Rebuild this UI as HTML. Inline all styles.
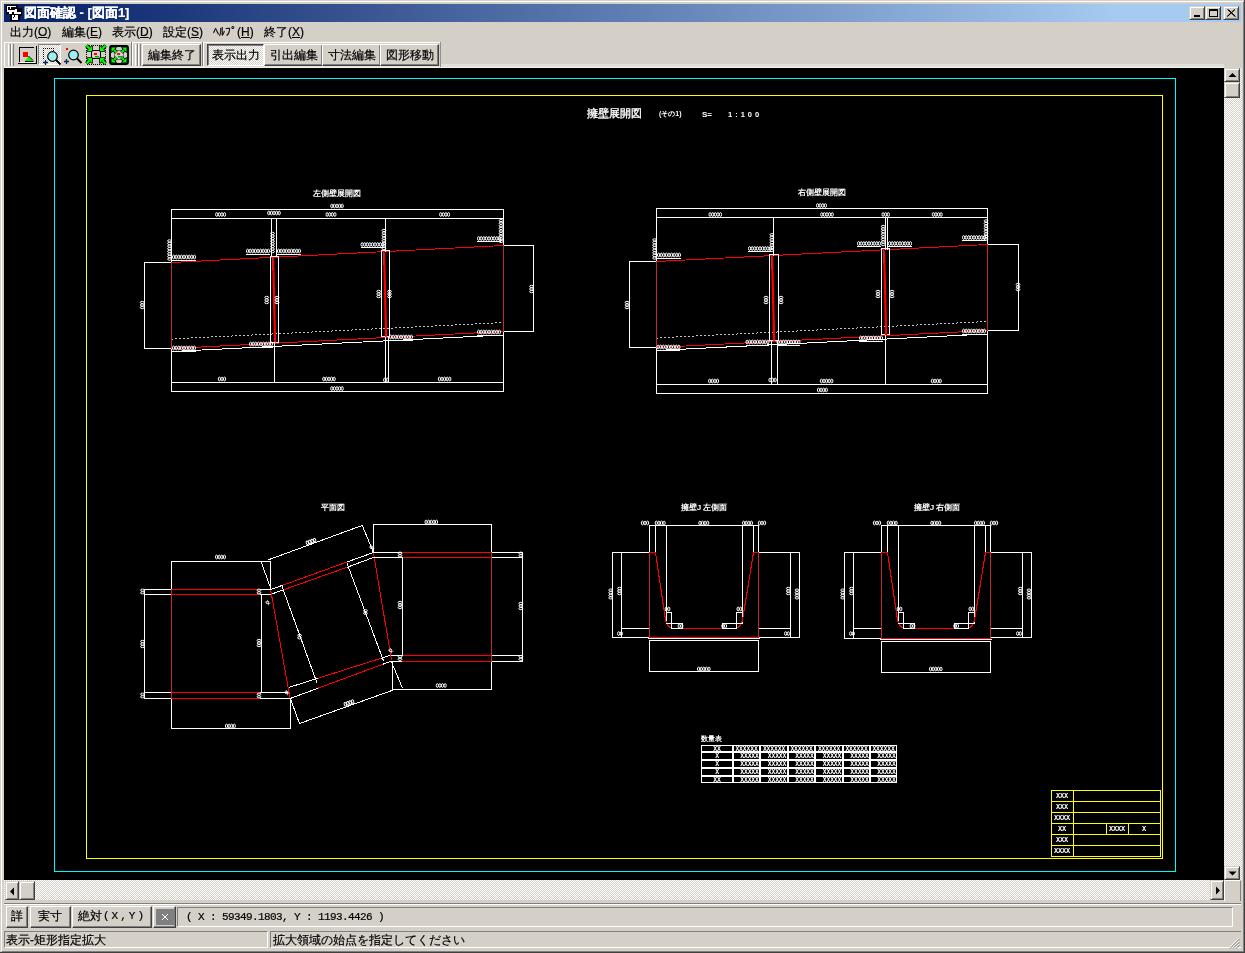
<!DOCTYPE html>
<html><head><meta charset="utf-8">
<style>
*{margin:0;padding:0;box-sizing:border-box}
html,body{width:1245px;height:953px;overflow:hidden;background:#D4D0C8;font-family:"Liberation Sans",sans-serif;font-size:12px;color:#000}
.a{position:absolute}
.t{position:absolute;white-space:nowrap;line-height:12px;font-size:12px;will-change:transform;-webkit-text-stroke:0.2px currentColor}
.m{font-family:"Liberation Mono",monospace;font-size:10px}
.raised{border-top:1px solid #fff;border-left:1px solid #fff;border-right:1px solid #404040;border-bottom:1px solid #404040;box-shadow:inset -1px -1px 0 #808080}
.raised2{border-top:1px solid #D4D0C8;border-left:1px solid #D4D0C8;border-right:1px solid #404040;border-bottom:1px solid #404040;box-shadow:inset 1px 1px 0 #fff,inset -1px -1px 0 #808080}
.sunk{border-top:1px solid #808080;border-left:1px solid #808080;border-right:1px solid #fff;border-bottom:1px solid #fff}
.dither{background-color:#fff;background-image:linear-gradient(45deg,#D4D0C8 25%,transparent 25%,transparent 75%,#D4D0C8 75%),linear-gradient(45deg,#D4D0C8 25%,transparent 25%,transparent 75%,#D4D0C8 75%);background-size:2px 2px;background-position:0 0,1px 1px}
.grip{position:absolute;width:3px;border-left:1px solid #fff;border-right:1px solid #808080}
</style></head><body>
<!-- window frame -->
<div class="a" style="left:1px;top:1px;width:1243px;height:951px;border-top:1px solid #fff;border-left:1px solid #fff;border-right:1px solid #808080;border-bottom:1px solid #808080"></div>
<div class="a" style="left:0;top:0;width:1245px;height:953px;border-right:1px solid #404040;border-bottom:1px solid #404040"></div>

<!-- title bar -->
<div class="a" style="left:4px;top:4px;width:1237px;height:18px;background:linear-gradient(to right,#0A246A 0%,#0A246A 3%,#A6CAF0 90%)"></div>
<svg class="a" style="left:6px;top:5px" width="16" height="16" shape-rendering="crispEdges">
<rect x="0" y="0" width="12" height="9" fill="#000"/><rect x="4" y="8" width="10" height="8" fill="#000"/><rect x="8" y="3" width="8" height="8" fill="#000"/>
<rect x="1" y="1" width="9" height="1" fill="#fff"/><rect x="1" y="2" width="1" height="5" fill="#fff"/><rect x="4" y="2" width="1" height="2" fill="#fff"/>
<rect x="1" y="5" width="9" height="2" fill="#fff"/><rect x="3" y="7" width="3" height="2" fill="#fff"/><rect x="9" y="4" width="2" height="4" fill="#fff"/>
<rect x="8" y="7" width="7" height="2" fill="#fff"/><rect x="6" y="10" width="6" height="5" fill="#fff"/><rect x="8" y="10" width="1" height="2" fill="#000"/><rect x="7" y="12" width="1" height="1" fill="#000"/>
</svg>
<div class="t" style="left:24px;top:6px;color:#fff;font-weight:bold;font-size:13px;line-height:13px">図面確認 - [図面1]</div>
<!-- caption buttons -->
<div class="a raised2" style="left:1189px;top:6px;width:16px;height:14px;background:#D4D0C8"><div class="a" style="left:4px;top:8px;width:6px;height:2px;background:#000"></div></div>
<div class="a raised2" style="left:1205px;top:6px;width:16px;height:14px;background:#D4D0C8"><div class="a" style="left:3px;top:2px;width:9px;height:8px;border:1px solid #000;border-top-width:2px"></div></div>
<div class="a raised2" style="left:1223px;top:6px;width:16px;height:14px;background:#D4D0C8"><svg class="a" style="left:3px;top:2px" width="9" height="8"><path d="M0.5 0.5L8 7.5M1.5 0.5L8.5 7.5M8 0.5L0.5 7.5M7.5 0.5L0 7.5" stroke="#000" stroke-width="1"/></svg></div>

<!-- menu -->
<div class="t" style="left:10px;top:26px">出力(<u>O</u>)</div>
<div class="t" style="left:62px;top:26px">編集(<u>E</u>)</div>
<div class="t" style="left:112px;top:26px">表示(<u>D</u>)</div>
<div class="t" style="left:163px;top:26px">設定(<u>S</u>)</div>
<div class="t" style="left:213px;top:26px">ﾍﾙﾌﾟ(<u>H</u>)</div>
<div class="t" style="left:264px;top:26px">終了(<u>X</u>)</div>

<!-- toolbar -->
<div class="a" style="left:4px;top:42px;width:437px;height:1px;background:#fff"></div>
<div class="a" style="left:441px;top:64px;width:783px;height:2px;background:#E2E0DA"></div>
<div class="a" style="left:4px;top:66px;width:1220px;height:1px;background:#E4E1DB"></div>
<div class="a" style="left:4px;top:67px;width:1220px;height:1px;background:#F2F1EE"></div>
<!-- band 1 -->
<div class="a" style="left:4px;top:42px;width:1px;height:24px;background:#fff"></div>
<div class="grip" style="left:8px;top:44px;height:22px"></div>
<div class="grip" style="left:11px;top:44px;height:22px"></div>

<svg class="a" style="left:0;top:0" width="140" height="68">
  <g shape-rendering="crispEdges">
  <path d="M19.5 62V47.5H34" stroke="#000" fill="none"/>
  <path d="M20 62.5H35" stroke="#fff" fill="none"/>
  <path d="M18 63.5H36.5V46" stroke="#000" fill="none"/>
  <rect x="23" y="52" width="5" height="5" fill="#f00"/>
  </g>
  <path d="M25 61H33L28.5 56.5Z" fill="#0f0"/>
  <path d="M25 61.5H33.5M28.5 56L33 60.5" stroke="#000" fill="none"/>
  <!-- icon2 pressed -->
  <rect x="38" y="44" width="23" height="21" fill="#fff"/>
</svg>
<div class="a dither" style="left:38px;top:44px;width:23px;height:21px;border-top:1px solid #808080;border-left:1px solid #808080;border-right:1px solid #fff;border-bottom:1px solid #fff"></div>
<svg class="a" style="left:0;top:0" width="140" height="68">
  <g shape-rendering="crispEdges" fill="#000">
   <rect x="43" y="48" width="1" height="1"/><rect x="45" y="48" width="1" height="1"/><rect x="47" y="48" width="1" height="1"/><rect x="49" y="48" width="1" height="1"/><rect x="51" y="48" width="1" height="1"/><rect x="53" y="48" width="1" height="1"/>
   <rect x="43" y="50" width="1" height="1"/><rect x="43" y="52" width="1" height="1"/><rect x="43" y="54" width="1" height="1"/><rect x="43" y="56" width="1" height="1"/><rect x="43" y="58" width="1" height="1"/>
   <rect x="53" y="50" width="1" height="1"/>
  </g>
  <circle cx="52.5" cy="56.5" r="4.8" fill="#9ef0f0" stroke="#000" stroke-width="1.2"/>
  <path d="M56 60L60.5 64.5" stroke="#000" stroke-width="2"/>
  <path d="M45.5 60v5M43 62.5h5" stroke="#0A246A" stroke-width="1.3"/>
  <!-- icon3 -->
  <rect x="66" y="48" width="2" height="2" fill="#f00"/>
  <circle cx="73.5" cy="55" r="4.8" fill="#9ef0f0" stroke="#000" stroke-width="1.2"/>
  <path d="M77 58.5L81.5 63" stroke="#000" stroke-width="2"/>
  <path d="M66.5 59v5M64 61.5h5" stroke="#0A246A" stroke-width="1.3"/>
  <!-- icon4 -->
  <g shape-rendering="crispEdges" fill="#000"><rect x="87" y="45" width="1" height="1"/><rect x="87" y="64" width="1" height="1"/><rect x="89" y="45" width="1" height="1"/><rect x="89" y="64" width="1" height="1"/><rect x="91" y="45" width="1" height="1"/><rect x="91" y="64" width="1" height="1"/><rect x="93" y="45" width="1" height="1"/><rect x="93" y="64" width="1" height="1"/><rect x="95" y="45" width="1" height="1"/><rect x="95" y="64" width="1" height="1"/><rect x="97" y="45" width="1" height="1"/><rect x="97" y="64" width="1" height="1"/><rect x="99" y="45" width="1" height="1"/><rect x="99" y="64" width="1" height="1"/><rect x="101" y="45" width="1" height="1"/><rect x="101" y="64" width="1" height="1"/><rect x="103" y="45" width="1" height="1"/><rect x="103" y="64" width="1" height="1"/><rect x="105" y="45" width="1" height="1"/><rect x="105" y="64" width="1" height="1"/><rect x="86" y="46" width="1" height="1"/><rect x="105" y="46" width="1" height="1"/><rect x="86" y="48" width="1" height="1"/><rect x="105" y="48" width="1" height="1"/><rect x="86" y="50" width="1" height="1"/><rect x="105" y="50" width="1" height="1"/><rect x="86" y="52" width="1" height="1"/><rect x="105" y="52" width="1" height="1"/><rect x="86" y="54" width="1" height="1"/><rect x="105" y="54" width="1" height="1"/><rect x="86" y="56" width="1" height="1"/><rect x="105" y="56" width="1" height="1"/><rect x="86" y="58" width="1" height="1"/><rect x="105" y="58" width="1" height="1"/><rect x="86" y="60" width="1" height="1"/><rect x="105" y="60" width="1" height="1"/><rect x="86" y="62" width="1" height="1"/><rect x="105" y="62" width="1" height="1"/></g>
  <rect x="91.5" y="50.5" width="9" height="8" fill="#D4D0C8" stroke="#000"/>
  <rect x="94" y="53" width="3" height="2" fill="#f00"/><rect x="95" y="56" width="4" height="1.5" fill="#0a0"/>
<path d="M92 51L87 51L92 46Z" fill="#000" stroke="#000" stroke-width="1.6" stroke-linejoin="round"/><path d="M89.5 48.5L86.5 45.5" stroke="#000" stroke-width="3.8"/><path d="M100 51L105 51L100 46Z" fill="#000" stroke="#000" stroke-width="1.6" stroke-linejoin="round"/><path d="M102.5 48.5L105.5 45.5" stroke="#000" stroke-width="3.8"/><path d="M92 58L87 58L92 63Z" fill="#000" stroke="#000" stroke-width="1.6" stroke-linejoin="round"/><path d="M89.5 60.5L86.5 63.5" stroke="#000" stroke-width="3.8"/><path d="M100 58L105 58L100 63Z" fill="#000" stroke="#000" stroke-width="1.6" stroke-linejoin="round"/><path d="M102.5 60.5L105.5 63.5" stroke="#000" stroke-width="3.8"/><path d="M92 51L87 51L92 46Z" fill="#00ff00"/><path d="M89.5 48.5L86.5 45.5" stroke="#00ff00" stroke-width="2.2"/><path d="M100 51L105 51L100 46Z" fill="#00ff00"/><path d="M102.5 48.5L105.5 45.5" stroke="#00ff00" stroke-width="2.2"/><path d="M92 58L87 58L92 63Z" fill="#00ff00"/><path d="M89.5 60.5L86.5 63.5" stroke="#00ff00" stroke-width="2.2"/><path d="M100 58L105 58L100 63Z" fill="#00ff00"/><path d="M102.5 60.5L105.5 63.5" stroke="#00ff00" stroke-width="2.2"/>
  <!-- icon5 -->
  <rect x="110" y="46" width="18" height="18" rx="1.5" fill="#D4D0C8" stroke="#000" stroke-width="1.8"/>
  <rect x="114.5" y="50.5" width="9" height="9" fill="none" stroke="#000" stroke-dasharray="1 1" stroke-width="0.9"/>
  <rect x="117" y="53" width="3" height="2" fill="#e02020"/><rect x="118" y="56" width="4" height="1.5" fill="#0a0"/>
<path d="M111.5 47.5L116.0 47.5L111.5 52.0Z" fill="#000" stroke="#000" stroke-width="1.6" stroke-linejoin="round"/><path d="M114.0 50.0L116.5 52.5" stroke="#000" stroke-width="3.6"/><path d="M126.5 47.5L122.0 47.5L126.5 52.0Z" fill="#000" stroke="#000" stroke-width="1.6" stroke-linejoin="round"/><path d="M124.0 50.0L121.5 52.5" stroke="#000" stroke-width="3.6"/><path d="M111.5 62.5L116.0 62.5L111.5 58.0Z" fill="#000" stroke="#000" stroke-width="1.6" stroke-linejoin="round"/><path d="M114.0 60.0L116.5 57.5" stroke="#000" stroke-width="3.6"/><path d="M126.5 62.5L122.0 62.5L126.5 58.0Z" fill="#000" stroke="#000" stroke-width="1.6" stroke-linejoin="round"/><path d="M124.0 60.0L121.5 57.5" stroke="#000" stroke-width="3.6"/><path d="M111.5 47.5L116.0 47.5L111.5 52.0Z" fill="#00ff00"/><path d="M114.0 50.0L116.5 52.5" stroke="#00ff00" stroke-width="2"/><path d="M126.5 47.5L122.0 47.5L126.5 52.0Z" fill="#00ff00"/><path d="M124.0 50.0L121.5 52.5" stroke="#00ff00" stroke-width="2"/><path d="M111.5 62.5L116.0 62.5L111.5 58.0Z" fill="#00ff00"/><path d="M114.0 60.0L116.5 57.5" stroke="#00ff00" stroke-width="2"/><path d="M126.5 62.5L122.0 62.5L126.5 58.0Z" fill="#00ff00"/><path d="M124.0 60.0L121.5 57.5" stroke="#00ff00" stroke-width="2"/>
</svg>
<div class="a" style="left:131px;top:42px;width:1px;height:24px;background:#808080"></div>
<div class="a" style="left:132px;top:42px;width:1px;height:24px;background:#fff"></div>
<!-- band 2 -->
<div class="grip" style="left:135px;top:44px;height:22px"></div>
<div class="grip" style="left:138px;top:44px;height:22px"></div>
<div class="a raised" style="left:142px;top:44px;width:59px;height:22px;background:#D4D0C8"></div>
<div class="t" style="left:148px;top:49px">編集終了</div>
<div class="a" style="left:202px;top:42px;width:1px;height:24px;background:#808080"></div>
<div class="a" style="left:203px;top:42px;width:1px;height:24px;background:#fff"></div>
<!-- band 3 -->
<div class="a dither" style="left:207px;top:44px;width:57px;height:22px;border-top:1px solid #404040;border-left:1px solid #404040;border-right:1px solid #fff;border-bottom:1px solid #fff;box-shadow:inset 1px 1px 0 #808080"></div>
<div class="t" style="left:212px;top:49px">表示出力</div>
<div class="a raised" style="left:264px;top:44px;width:59px;height:22px;background:#D4D0C8"></div>
<div class="t" style="left:270px;top:49px">引出編集</div>
<div class="a raised" style="left:322px;top:44px;width:59px;height:22px;background:#D4D0C8"></div>
<div class="t" style="left:328px;top:49px">寸法編集</div>
<div class="a raised" style="left:380px;top:44px;width:59px;height:22px;background:#D4D0C8"></div>
<div class="t" style="left:386px;top:49px">図形移動</div>
<div class="a" style="left:440px;top:42px;width:1px;height:25px;background:#909090"></div>


<!-- canvas -->
<div class="a" style="left:4px;top:68px;width:1220px;height:812px;background:#000"></div>
<!--CAD--><svg class="a" style="left:0;top:0;will-change:transform" width="1245" height="880" shape-rendering="crispEdges" font-family="Liberation Sans"><rect x="54.5" y="78.5" width="1121" height="793" fill="none" stroke="#00f8ff"/>
<rect x="86.5" y="95.5" width="1076" height="763" fill="none" stroke="#ffff00"/>
<path d="M171 209.5H504" stroke="#ffffff"/>
<path d="M171 218.5H504" stroke="#ffffff"/>
<path d="M171 382.5H504" stroke="#ffffff"/>
<path d="M171 391.5H504" stroke="#ffffff"/>
<path d="M171.5 209V392" stroke="#ffffff"/>
<path d="M503.5 209V392" stroke="#ffffff"/>
<path d="M144 262.5H171" stroke="#ffffff"/>
<path d="M144 348.5H171" stroke="#ffffff"/>
<path d="M144.5 262V349" stroke="#ffffff"/>
<path d="M503 245.5H534" stroke="#ffffff"/>
<path d="M503 331.5H534" stroke="#ffffff"/>
<path d="M533.5 245V332" stroke="#ffffff"/>
<path d="M171.5 351.5L503.5 335" stroke="#ffffff"/>
<path d="M171.5 339L503.5 322.5" stroke="#ffffff" stroke-dasharray="1.5 2.5" stroke-width="0.9" stroke-opacity="0.85"/>
<path d="M171.5 262.5L503.5 245.5" stroke="#ff0000"/>
<path d="M171.5 348.5L503.5 331.5" stroke="#ff0000"/>
<path d="M171.5 262V349" stroke="#c42a2a"/>
<path d="M503.5 245V332" stroke="#c42a2a"/>
<rect x="270.5" y="256.5" width="8" height="86" fill="none" stroke="#ffffff"/>
<path d="M272 257.9563253012048h2.2L276.2 342.4563253012048h-2.2z" fill="#ff0000" shape-rendering="auto"/>
<path d="M272.5 257.4563253012048V270.4563253012048" stroke="#c42a2a"/>
<path d="M271.5 218V257.4563253012048" stroke="#ffffff"/>
<path d="M276.5 218V257.4563253012048" stroke="#ffffff"/>
<path d="M274.5 342.4563253012048V383" stroke="#ffffff"/>
<rect x="381.5" y="250.5" width="8" height="86" fill="none" stroke="#ffffff"/>
<path d="M383 252.2725903614458h2.2L387.2 336.7725903614458h-2.2z" fill="#ff0000" shape-rendering="auto"/>
<path d="M383.5 251.7725903614458V264.7725903614458" stroke="#c42a2a"/>
<path d="M385.5 218V251.7725903614458" stroke="#ffffff"/>
<path d="M385.5 336.7725903614458V383" stroke="#ffffff"/>
<path d="M388.5 336.7725903614458V383" stroke="#ffffff"/>
<text x="337" y="196" font-size="8" fill="#ffffff" text-anchor="middle" font-weight="bold">左側壁展開図</text>
<path d="M656 208.5H988" stroke="#ffffff"/>
<path d="M656 217.5H988" stroke="#ffffff"/>
<path d="M656 384.5H988" stroke="#ffffff"/>
<path d="M656 393.5H988" stroke="#ffffff"/>
<path d="M656.5 208V394" stroke="#ffffff"/>
<path d="M987.5 208V394" stroke="#ffffff"/>
<path d="M629 261.5H656" stroke="#ffffff"/>
<path d="M629 347.5H656" stroke="#ffffff"/>
<path d="M629.5 261V348" stroke="#ffffff"/>
<path d="M987 244.5H1019" stroke="#ffffff"/>
<path d="M987 330.5H1019" stroke="#ffffff"/>
<path d="M1018.5 244V331" stroke="#ffffff"/>
<path d="M656.5 350.5L987.5 334" stroke="#ffffff"/>
<path d="M656.5 338L987.5 321.5" stroke="#ffffff" stroke-dasharray="1.5 2.5" stroke-width="0.9" stroke-opacity="0.85"/>
<path d="M656.5 261.5L987.5 244.5" stroke="#ff0000"/>
<path d="M656.5 347.5L987.5 330.5" stroke="#ff0000"/>
<path d="M656.5 261V348" stroke="#c42a2a"/>
<path d="M987.5 244V331" stroke="#c42a2a"/>
<rect x="769.5" y="254.5" width="9" height="86" fill="none" stroke="#ffffff"/>
<path d="M771 256.22205438066464h2.2L775.2 340.72205438066464h-2.2z" fill="#ff0000" shape-rendering="auto"/>
<path d="M771.5 255.72205438066464V268.72205438066464" stroke="#c42a2a"/>
<path d="M773.5 217V255.72205438066464" stroke="#ffffff"/>
<path d="M771.5 340.72205438066464V385" stroke="#ffffff"/>
<path d="M777.5 340.72205438066464V385" stroke="#ffffff"/>
<rect x="881.5" y="248.5" width="8" height="86" fill="none" stroke="#ffffff"/>
<path d="M883 250.46978851963746h2.2L887.2 334.96978851963746h-2.2z" fill="#ff0000" shape-rendering="auto"/>
<path d="M883.5 249.96978851963746V262.96978851963746" stroke="#c42a2a"/>
<path d="M885.5 217V249.96978851963746" stroke="#ffffff"/>
<path d="M887.5 217V249.96978851963746" stroke="#ffffff"/>
<path d="M885.5 334.96978851963746V385" stroke="#ffffff"/>
<text x="822" y="195" font-size="8" fill="#ffffff" text-anchor="middle" font-weight="bold">右側壁展開図</text>
<path d="M171 561.5H271" stroke="#ffffff"/>
<path d="M171.5 561V729" stroke="#ffffff"/>
<path d="M171 728.5H291" stroke="#ffffff"/>
<path d="M144 589.5H171" stroke="#ffffff"/>
<path d="M171 589.5H260" stroke="#ff0000"/>
<path d="M260 589.5H271" stroke="#ffffff"/>
<path d="M144 594.5H171" stroke="#ffffff"/>
<path d="M171 594.5H260" stroke="#ff0000"/>
<path d="M260 594.5H272" stroke="#ffffff"/>
<path d="M144 692.5H171" stroke="#ffffff"/>
<path d="M171 692.5H260" stroke="#ff0000"/>
<path d="M260 692.5H289" stroke="#ffffff"/>
<path d="M144 698.5H171" stroke="#ffffff"/>
<path d="M171 698.5H260" stroke="#ff0000"/>
<path d="M260 698.5H291" stroke="#ffffff"/>
<path d="M144.5 589V699" stroke="#ffffff"/>
<path d="M171.5 589V699" stroke="#c42a2a"/>
<path d="M261.5 594V693" stroke="#ffffff"/>
<path d="M270.5 561V590" stroke="#ffffff"/>
<path d="M261 561.5L270.6 588" stroke="#ffffff"/>
<path d="M290.5 698V729" stroke="#ffffff"/>
<path d="M290.7 699.5L299.5 723.5" stroke="#ffffff"/>
<path d="M270.6 589.6L282.5 585.3" stroke="#ffffff"/>
<path d="M282.5 585.3L346.5 562.2" stroke="#ff0000"/>
<path d="M346.5 562.2L373.4 552.5" stroke="#ffffff"/>
<path d="M271.7 594L284 589.6" stroke="#ffffff"/>
<path d="M284 589.6L347 567.3" stroke="#ff0000"/>
<path d="M347 567.3L373.9 557.3" stroke="#ffffff"/>
<path d="M288.6 687.5L317.8 678.3" stroke="#ffffff"/>
<path d="M317.8 678.3L380.5 658.4" stroke="#ff0000"/>
<path d="M380.5 658.4L390.9 655.1" stroke="#ffffff"/>
<path d="M290.1 698.5L317.8 688.3" stroke="#ffffff"/>
<path d="M317.8 688.3L383 664.2" stroke="#ff0000"/>
<path d="M383 664.2L391.9 660.9" stroke="#ffffff"/>
<path d="M270.6 589.6L290 698" stroke="#ff0000"/>
<path d="M373.4 552.5L391.5 660" stroke="#ff0000"/>
<path d="M268.4 559.8L362.3 525.4" stroke="#ffffff"/>
<path d="M362.3 525.4L373.4 552.5" stroke="#ffffff"/>
<path d="M299.5 723.5L393 690.1" stroke="#ffffff"/>
<path d="M281.9 586L317 683" stroke="#ffffff"/>
<path d="M346.9 563L383.6 661" stroke="#ffffff"/>
<path d="M373 524.5H492" stroke="#ffffff"/>
<path d="M373.5 524V553" stroke="#ffffff"/>
<path d="M491.5 524V690" stroke="#ffffff"/>
<path d="M373 552.5H402" stroke="#ffffff"/>
<path d="M402 552.5H491" stroke="#ff0000"/>
<path d="M491 552.5H523" stroke="#ffffff"/>
<path d="M373 557.5H402" stroke="#ffffff"/>
<path d="M402 557.5H491" stroke="#ff0000"/>
<path d="M491 557.5H523" stroke="#ffffff"/>
<path d="M391 655.5H402" stroke="#ffffff"/>
<path d="M402 655.5H491" stroke="#ff0000"/>
<path d="M491 655.5H523" stroke="#ffffff"/>
<path d="M392 661.5H402" stroke="#ffffff"/>
<path d="M402 661.5H491" stroke="#ff0000"/>
<path d="M491 661.5H523" stroke="#ffffff"/>
<path d="M491.5 552V662" stroke="#c42a2a"/>
<path d="M402.5 557V656" stroke="#ffffff"/>
<path d="M522.5 552V662" stroke="#ffffff"/>
<path d="M392 689.5H492" stroke="#ffffff"/>
<path d="M392.5 661V690" stroke="#ffffff"/>
<path d="M391.5 662L402.4 688" stroke="#ffffff"/>
<text x="333" y="510" font-size="8" fill="#ffffff" text-anchor="middle" font-weight="bold">平面図</text>
<path d="M649 525.5H759" stroke="#ffffff"/>
<path d="M649.5 525V553" stroke="#ffffff"/>
<path d="M758.5 525V553" stroke="#ffffff"/>
<path d="M655.5 525V553" stroke="#ffffff"/>
<path d="M753.5 525V553" stroke="#ffffff"/>
<path d="M666.5 525V624" stroke="#ffffff"/>
<path d="M742.5 525V624" stroke="#ffffff"/>
<path d="M612 552.5H650" stroke="#ffffff"/>
<path d="M612 637.5H650" stroke="#ffffff"/>
<path d="M612.5 552V638" stroke="#ffffff"/>
<path d="M621.5 552V638" stroke="#ffffff"/>
<path d="M621 628.5H649" stroke="#ffffff"/>
<path d="M758 552.5H800" stroke="#ffffff"/>
<path d="M758 637.5H800" stroke="#ffffff"/>
<path d="M799.5 552V638" stroke="#ffffff"/>
<path d="M790.5 552V638" stroke="#ffffff"/>
<path d="M758 628.5H790" stroke="#ffffff"/>
<path d="M649.5 552V638" stroke="#c42a2a"/>
<path d="M758.5 552V638" stroke="#c42a2a"/>
<path d="M649 552.5H656" stroke="#ff0000"/>
<path d="M753 552.5H759" stroke="#ff0000"/>
<path d="M655.5 552.5L665.5 620Q667 626 672 628.5" stroke="#ff0000" fill="none" stroke-width="1.1"/>
<path d="M753.5 552.5L742.5 620Q741 626 736 628.5" stroke="#ff0000" fill="none" stroke-width="1.1"/>
<path d="M683 628.5H722" stroke="#ff0000"/>
<path d="M666 612.5H671.5V628.5H682.5V623.5H666" stroke="#ffffff" fill="none"/>
<path d="M743 612.5H736.5V628.5H722.5V623.5H743" stroke="#ffffff" fill="none"/>
<path d="M648 638.5H760" stroke="#ffffff"/>
<path d="M649 637.5H759" stroke="#ff0000"/>
<rect x="649.5" y="640.5" width="109" height="31" fill="none" stroke="#ffffff"/>
<text x="704" y="510" font-size="8" fill="#ffffff" text-anchor="middle" font-weight="bold">擁壁J 左側面</text>
<path d="M881 525.5H991" stroke="#ffffff"/>
<path d="M881.5 525V553" stroke="#ffffff"/>
<path d="M990.5 525V553" stroke="#ffffff"/>
<path d="M887.5 525V553" stroke="#ffffff"/>
<path d="M985.5 525V553" stroke="#ffffff"/>
<path d="M898.5 525V624" stroke="#ffffff"/>
<path d="M974.5 525V624" stroke="#ffffff"/>
<path d="M844 552.5H882" stroke="#ffffff"/>
<path d="M844 638.5H882" stroke="#ffffff"/>
<path d="M844.5 552V639" stroke="#ffffff"/>
<path d="M853.5 552V639" stroke="#ffffff"/>
<path d="M853 628.5H881" stroke="#ffffff"/>
<path d="M990 552.5H1032" stroke="#ffffff"/>
<path d="M990 637.5H1032" stroke="#ffffff"/>
<path d="M1031.5 552V638" stroke="#ffffff"/>
<path d="M1022.5 552V638" stroke="#ffffff"/>
<path d="M990 628.5H1022" stroke="#ffffff"/>
<path d="M881.5 552V639" stroke="#c42a2a"/>
<path d="M990.5 552V639" stroke="#c42a2a"/>
<path d="M881 552.5H888" stroke="#ff0000"/>
<path d="M985 552.5H991" stroke="#ff0000"/>
<path d="M887.5 552.5L897.5 620Q899 626 904 628.5" stroke="#ff0000" fill="none" stroke-width="1.1"/>
<path d="M985.5 552.5L974.5 620Q973 626 968 628.5" stroke="#ff0000" fill="none" stroke-width="1.1"/>
<path d="M915 628.5H954" stroke="#ff0000"/>
<path d="M898 612.5H903.5V628.5H914.5V623.5H898" stroke="#ffffff" fill="none"/>
<path d="M975 612.5H968.5V628.5H954.5V623.5H975" stroke="#ffffff" fill="none"/>
<path d="M880 639.5H992" stroke="#ffffff"/>
<path d="M881 638.5H991" stroke="#ff0000"/>
<rect x="881.5" y="641.5" width="109" height="31" fill="none" stroke="#ffffff"/>
<text x="937" y="510" font-size="8" fill="#ffffff" text-anchor="middle" font-weight="bold">擁壁J 右側面</text>
<text x="701" y="741" font-size="7" fill="#ffffff" text-anchor="start" font-weight="bold">数量表</text>
<rect x="701.5" y="745.5" width="31" height="6" fill="none" stroke="#ffffff"/>
<rect x="701.5" y="752.5" width="31" height="7" fill="none" stroke="#ffffff"/>
<rect x="701.5" y="760.5" width="31" height="7" fill="none" stroke="#ffffff"/>
<rect x="701.5" y="768.5" width="31" height="7" fill="none" stroke="#ffffff"/>
<rect x="701.5" y="776.5" width="31" height="6" fill="none" stroke="#ffffff"/>
<rect x="733.5" y="745.5" width="26" height="6" fill="none" stroke="#ffffff"/>
<rect x="733.5" y="752.5" width="26" height="7" fill="none" stroke="#ffffff"/>
<rect x="733.5" y="760.5" width="26" height="7" fill="none" stroke="#ffffff"/>
<rect x="733.5" y="768.5" width="26" height="7" fill="none" stroke="#ffffff"/>
<rect x="733.5" y="776.5" width="26" height="6" fill="none" stroke="#ffffff"/>
<rect x="760.5" y="745.5" width="27" height="6" fill="none" stroke="#ffffff"/>
<rect x="760.5" y="752.5" width="27" height="7" fill="none" stroke="#ffffff"/>
<rect x="760.5" y="760.5" width="27" height="7" fill="none" stroke="#ffffff"/>
<rect x="760.5" y="768.5" width="27" height="7" fill="none" stroke="#ffffff"/>
<rect x="760.5" y="776.5" width="27" height="6" fill="none" stroke="#ffffff"/>
<rect x="788.5" y="745.5" width="26" height="6" fill="none" stroke="#ffffff"/>
<rect x="788.5" y="752.5" width="26" height="7" fill="none" stroke="#ffffff"/>
<rect x="788.5" y="760.5" width="26" height="7" fill="none" stroke="#ffffff"/>
<rect x="788.5" y="768.5" width="26" height="7" fill="none" stroke="#ffffff"/>
<rect x="788.5" y="776.5" width="26" height="6" fill="none" stroke="#ffffff"/>
<rect x="815.5" y="745.5" width="27" height="6" fill="none" stroke="#ffffff"/>
<rect x="815.5" y="752.5" width="27" height="7" fill="none" stroke="#ffffff"/>
<rect x="815.5" y="760.5" width="27" height="7" fill="none" stroke="#ffffff"/>
<rect x="815.5" y="768.5" width="27" height="7" fill="none" stroke="#ffffff"/>
<rect x="815.5" y="776.5" width="27" height="6" fill="none" stroke="#ffffff"/>
<rect x="843.5" y="745.5" width="26" height="6" fill="none" stroke="#ffffff"/>
<rect x="843.5" y="752.5" width="26" height="7" fill="none" stroke="#ffffff"/>
<rect x="843.5" y="760.5" width="26" height="7" fill="none" stroke="#ffffff"/>
<rect x="843.5" y="768.5" width="26" height="7" fill="none" stroke="#ffffff"/>
<rect x="843.5" y="776.5" width="26" height="6" fill="none" stroke="#ffffff"/>
<rect x="870.5" y="745.5" width="26" height="6" fill="none" stroke="#ffffff"/>
<rect x="870.5" y="752.5" width="26" height="7" fill="none" stroke="#ffffff"/>
<rect x="870.5" y="760.5" width="26" height="7" fill="none" stroke="#ffffff"/>
<rect x="870.5" y="768.5" width="26" height="7" fill="none" stroke="#ffffff"/>
<rect x="870.5" y="776.5" width="26" height="6" fill="none" stroke="#ffffff"/>
<rect x="1051.5" y="790.5" width="109" height="66" fill="none" stroke="#ffff00"/>
<path d="M1051 801.5H1161" stroke="#ffff00"/>
<path d="M1051 812.5H1161" stroke="#ffff00"/>
<path d="M1051 823.5H1161" stroke="#ffff00"/>
<path d="M1051 834.5H1161" stroke="#ffff00"/>
<path d="M1051 845.5H1161" stroke="#ffff00"/>
<path d="M1073.5 790V857" stroke="#ffff00"/>
<path d="M1106.5 823V835" stroke="#ffff00"/>
<path d="M1128.5 823V835" stroke="#ffff00"/>
<text x="587" y="117" font-size="11" fill="#ffffff" text-anchor="start" stroke="#fff" stroke-width="0.35">擁壁展開図</text>
<text x="659" y="116" font-size="7" fill="#ffffff" text-anchor="start" font-weight="bold">(その1)</text>
<text x="702" y="116.5" font-size="8" fill="#ffffff" text-anchor="start" font-weight="bold">S=</text>
<text x="728" y="116.5" font-size="7.5" fill="#ffffff" text-anchor="start" font-weight="bold" letter-spacing="3">1:100</text>
<path d="M215.60 214.5a1.1 1.9 0 1 0 2.2 0a1.1 1.9 0 1 0 -2.2 0M218.20 214.5a1.1 1.9 0 1 0 2.2 0a1.1 1.9 0 1 0 -2.2 0M220.80 214.5a1.1 1.9 0 1 0 2.2 0a1.1 1.9 0 1 0 -2.2 0M223.40 214.5a1.1 1.9 0 1 0 2.2 0a1.1 1.9 0 1 0 -2.2 0" fill="none" stroke="#ffffff" stroke-width="1" shape-rendering="auto"/>
<path d="M267.70 213a1.1 1.9 0 1 0 2.2 0a1.1 1.9 0 1 0 -2.2 0M270.30 213a1.1 1.9 0 1 0 2.2 0a1.1 1.9 0 1 0 -2.2 0M272.90 213a1.1 1.9 0 1 0 2.2 0a1.1 1.9 0 1 0 -2.2 0M275.50 213a1.1 1.9 0 1 0 2.2 0a1.1 1.9 0 1 0 -2.2 0M278.10 213a1.1 1.9 0 1 0 2.2 0a1.1 1.9 0 1 0 -2.2 0" fill="none" stroke="#ffffff" stroke-width="1" shape-rendering="auto"/>
<path d="M326.00 214.5a1.1 1.9 0 1 0 2.2 0a1.1 1.9 0 1 0 -2.2 0M328.60 214.5a1.1 1.9 0 1 0 2.2 0a1.1 1.9 0 1 0 -2.2 0M331.20 214.5a1.1 1.9 0 1 0 2.2 0a1.1 1.9 0 1 0 -2.2 0M333.80 214.5a1.1 1.9 0 1 0 2.2 0a1.1 1.9 0 1 0 -2.2 0" fill="none" stroke="#ffffff" stroke-width="1" shape-rendering="auto"/>
<path d="M439.60 214.5a1.1 1.9 0 1 0 2.2 0a1.1 1.9 0 1 0 -2.2 0M442.20 214.5a1.1 1.9 0 1 0 2.2 0a1.1 1.9 0 1 0 -2.2 0M444.80 214.5a1.1 1.9 0 1 0 2.2 0a1.1 1.9 0 1 0 -2.2 0M447.40 214.5a1.1 1.9 0 1 0 2.2 0a1.1 1.9 0 1 0 -2.2 0" fill="none" stroke="#ffffff" stroke-width="1" shape-rendering="auto"/>
<path d="M330.70 206a1.1 1.9 0 1 0 2.2 0a1.1 1.9 0 1 0 -2.2 0M333.30 206a1.1 1.9 0 1 0 2.2 0a1.1 1.9 0 1 0 -2.2 0M335.90 206a1.1 1.9 0 1 0 2.2 0a1.1 1.9 0 1 0 -2.2 0M338.50 206a1.1 1.9 0 1 0 2.2 0a1.1 1.9 0 1 0 -2.2 0M341.10 206a1.1 1.9 0 1 0 2.2 0a1.1 1.9 0 1 0 -2.2 0" fill="none" stroke="#ffffff" stroke-width="1" shape-rendering="auto"/>
<path d="M218.30 379a1.1 1.9 0 1 0 2.2 0a1.1 1.9 0 1 0 -2.2 0M220.90 379a1.1 1.9 0 1 0 2.2 0a1.1 1.9 0 1 0 -2.2 0M223.50 379a1.1 1.9 0 1 0 2.2 0a1.1 1.9 0 1 0 -2.2 0" fill="none" stroke="#ffffff" stroke-width="1" shape-rendering="auto"/>
<path d="M322.70 379a1.1 1.9 0 1 0 2.2 0a1.1 1.9 0 1 0 -2.2 0M325.30 379a1.1 1.9 0 1 0 2.2 0a1.1 1.9 0 1 0 -2.2 0M327.90 379a1.1 1.9 0 1 0 2.2 0a1.1 1.9 0 1 0 -2.2 0M330.50 379a1.1 1.9 0 1 0 2.2 0a1.1 1.9 0 1 0 -2.2 0M333.10 379a1.1 1.9 0 1 0 2.2 0a1.1 1.9 0 1 0 -2.2 0" fill="none" stroke="#ffffff" stroke-width="1" shape-rendering="auto"/>
<path d="M438.30 379a1.1 1.9 0 1 0 2.2 0a1.1 1.9 0 1 0 -2.2 0M440.90 379a1.1 1.9 0 1 0 2.2 0a1.1 1.9 0 1 0 -2.2 0M443.50 379a1.1 1.9 0 1 0 2.2 0a1.1 1.9 0 1 0 -2.2 0M446.10 379a1.1 1.9 0 1 0 2.2 0a1.1 1.9 0 1 0 -2.2 0M448.70 379a1.1 1.9 0 1 0 2.2 0a1.1 1.9 0 1 0 -2.2 0" fill="none" stroke="#ffffff" stroke-width="1" shape-rendering="auto"/>
<path d="M330.70 388.5a1.1 1.9 0 1 0 2.2 0a1.1 1.9 0 1 0 -2.2 0M333.30 388.5a1.1 1.9 0 1 0 2.2 0a1.1 1.9 0 1 0 -2.2 0M335.90 388.5a1.1 1.9 0 1 0 2.2 0a1.1 1.9 0 1 0 -2.2 0M338.50 388.5a1.1 1.9 0 1 0 2.2 0a1.1 1.9 0 1 0 -2.2 0M341.10 388.5a1.1 1.9 0 1 0 2.2 0a1.1 1.9 0 1 0 -2.2 0" fill="none" stroke="#ffffff" stroke-width="1" shape-rendering="auto"/>
<path d="M383.60 380a1.1 1.9 0 1 0 2.2 0a1.1 1.9 0 1 0 -2.2 0M386.20 380a1.1 1.9 0 1 0 2.2 0a1.1 1.9 0 1 0 -2.2 0" fill="none" stroke="#ffffff" stroke-width="1" shape-rendering="auto"/>
<path d="M159.30 250a1.1 1.9 0 1 0 2.2 0a1.1 1.9 0 1 0 -2.2 0M161.90 250a1.1 1.9 0 1 0 2.2 0a1.1 1.9 0 1 0 -2.2 0M164.50 250a1.1 1.9 0 1 0 2.2 0a1.1 1.9 0 1 0 -2.2 0M167.10 250a1.1 1.9 0 1 0 2.2 0a1.1 1.9 0 1 0 -2.2 0M169.70 250a1.1 1.9 0 1 0 2.2 0a1.1 1.9 0 1 0 -2.2 0M172.30 250a1.1 1.9 0 1 0 2.2 0a1.1 1.9 0 1 0 -2.2 0M174.90 250a1.1 1.9 0 1 0 2.2 0a1.1 1.9 0 1 0 -2.2 0M177.50 250a1.1 1.9 0 1 0 2.2 0a1.1 1.9 0 1 0 -2.2 0" fill="none" stroke="#ffffff" stroke-width="1" shape-rendering="auto" transform="rotate(-90 169.5 250)"/>
<path d="M262.30 242.5a1.1 1.9 0 1 0 2.2 0a1.1 1.9 0 1 0 -2.2 0M264.90 242.5a1.1 1.9 0 1 0 2.2 0a1.1 1.9 0 1 0 -2.2 0M267.50 242.5a1.1 1.9 0 1 0 2.2 0a1.1 1.9 0 1 0 -2.2 0M270.10 242.5a1.1 1.9 0 1 0 2.2 0a1.1 1.9 0 1 0 -2.2 0M272.70 242.5a1.1 1.9 0 1 0 2.2 0a1.1 1.9 0 1 0 -2.2 0M275.30 242.5a1.1 1.9 0 1 0 2.2 0a1.1 1.9 0 1 0 -2.2 0M277.90 242.5a1.1 1.9 0 1 0 2.2 0a1.1 1.9 0 1 0 -2.2 0M280.50 242.5a1.1 1.9 0 1 0 2.2 0a1.1 1.9 0 1 0 -2.2 0" fill="none" stroke="#ffffff" stroke-width="1" shape-rendering="auto" transform="rotate(-90 272.5 242.5)"/>
<path d="M373.70 239.5a1.1 1.9 0 1 0 2.2 0a1.1 1.9 0 1 0 -2.2 0M376.30 239.5a1.1 1.9 0 1 0 2.2 0a1.1 1.9 0 1 0 -2.2 0M378.90 239.5a1.1 1.9 0 1 0 2.2 0a1.1 1.9 0 1 0 -2.2 0M381.50 239.5a1.1 1.9 0 1 0 2.2 0a1.1 1.9 0 1 0 -2.2 0M384.10 239.5a1.1 1.9 0 1 0 2.2 0a1.1 1.9 0 1 0 -2.2 0M386.70 239.5a1.1 1.9 0 1 0 2.2 0a1.1 1.9 0 1 0 -2.2 0M389.30 239.5a1.1 1.9 0 1 0 2.2 0a1.1 1.9 0 1 0 -2.2 0M391.90 239.5a1.1 1.9 0 1 0 2.2 0a1.1 1.9 0 1 0 -2.2 0" fill="none" stroke="#ffffff" stroke-width="1" shape-rendering="auto" transform="rotate(-90 383.9 239.5)"/>
<path d="M489.50 231a1.1 1.9 0 1 0 2.2 0a1.1 1.9 0 1 0 -2.2 0M492.10 231a1.1 1.9 0 1 0 2.2 0a1.1 1.9 0 1 0 -2.2 0M494.70 231a1.1 1.9 0 1 0 2.2 0a1.1 1.9 0 1 0 -2.2 0M497.30 231a1.1 1.9 0 1 0 2.2 0a1.1 1.9 0 1 0 -2.2 0M499.90 231a1.1 1.9 0 1 0 2.2 0a1.1 1.9 0 1 0 -2.2 0M502.50 231a1.1 1.9 0 1 0 2.2 0a1.1 1.9 0 1 0 -2.2 0M505.10 231a1.1 1.9 0 1 0 2.2 0a1.1 1.9 0 1 0 -2.2 0M507.70 231a1.1 1.9 0 1 0 2.2 0a1.1 1.9 0 1 0 -2.2 0M510.30 231a1.1 1.9 0 1 0 2.2 0a1.1 1.9 0 1 0 -2.2 0" fill="none" stroke="#ffffff" stroke-width="1" shape-rendering="auto" transform="rotate(-90 501 231)"/>
<path d="M527.80 289a1.1 1.9 0 1 0 2.2 0a1.1 1.9 0 1 0 -2.2 0M530.40 289a1.1 1.9 0 1 0 2.2 0a1.1 1.9 0 1 0 -2.2 0M533.00 289a1.1 1.9 0 1 0 2.2 0a1.1 1.9 0 1 0 -2.2 0" fill="none" stroke="#ffffff" stroke-width="1" shape-rendering="auto" transform="rotate(-90 531.5 289)"/>
<path d="M138.50 305a1.1 1.9 0 1 0 2.2 0a1.1 1.9 0 1 0 -2.2 0M141.10 305a1.1 1.9 0 1 0 2.2 0a1.1 1.9 0 1 0 -2.2 0M143.70 305a1.1 1.9 0 1 0 2.2 0a1.1 1.9 0 1 0 -2.2 0" fill="none" stroke="#ffffff" stroke-width="1" shape-rendering="auto" transform="rotate(-90 142.2 305)"/>
<path d="M263.00 300a1.1 1.9 0 1 0 2.2 0a1.1 1.9 0 1 0 -2.2 0M265.60 300a1.1 1.9 0 1 0 2.2 0a1.1 1.9 0 1 0 -2.2 0M268.20 300a1.1 1.9 0 1 0 2.2 0a1.1 1.9 0 1 0 -2.2 0" fill="none" stroke="#ffffff" stroke-width="1" shape-rendering="auto" transform="rotate(-90 266.7 300)"/>
<path d="M273.30 300a1.1 1.9 0 1 0 2.2 0a1.1 1.9 0 1 0 -2.2 0M275.90 300a1.1 1.9 0 1 0 2.2 0a1.1 1.9 0 1 0 -2.2 0M278.50 300a1.1 1.9 0 1 0 2.2 0a1.1 1.9 0 1 0 -2.2 0" fill="none" stroke="#ffffff" stroke-width="1" shape-rendering="auto" transform="rotate(-90 277 300)"/>
<path d="M375.00 294a1.1 1.9 0 1 0 2.2 0a1.1 1.9 0 1 0 -2.2 0M377.60 294a1.1 1.9 0 1 0 2.2 0a1.1 1.9 0 1 0 -2.2 0M380.20 294a1.1 1.9 0 1 0 2.2 0a1.1 1.9 0 1 0 -2.2 0" fill="none" stroke="#ffffff" stroke-width="1" shape-rendering="auto" transform="rotate(-90 378.7 294)"/>
<path d="M385.80 294a1.1 1.9 0 1 0 2.2 0a1.1 1.9 0 1 0 -2.2 0M388.40 294a1.1 1.9 0 1 0 2.2 0a1.1 1.9 0 1 0 -2.2 0M391.00 294a1.1 1.9 0 1 0 2.2 0a1.1 1.9 0 1 0 -2.2 0" fill="none" stroke="#ffffff" stroke-width="1" shape-rendering="auto" transform="rotate(-90 389.5 294)"/>
<path d="M172.50 257a1.1 1.9 0 1 0 2.2 0a1.1 1.9 0 1 0 -2.2 0M175.10 257a1.1 1.9 0 1 0 2.2 0a1.1 1.9 0 1 0 -2.2 0M177.70 257a1.1 1.9 0 1 0 2.2 0a1.1 1.9 0 1 0 -2.2 0M180.30 257a1.1 1.9 0 1 0 2.2 0a1.1 1.9 0 1 0 -2.2 0M182.90 257a1.1 1.9 0 1 0 2.2 0a1.1 1.9 0 1 0 -2.2 0M185.50 257a1.1 1.9 0 1 0 2.2 0a1.1 1.9 0 1 0 -2.2 0M188.10 257a1.1 1.9 0 1 0 2.2 0a1.1 1.9 0 1 0 -2.2 0M190.70 257a1.1 1.9 0 1 0 2.2 0a1.1 1.9 0 1 0 -2.2 0M193.30 257a1.1 1.9 0 1 0 2.2 0a1.1 1.9 0 1 0 -2.2 0" fill="none" stroke="#ffffff" stroke-width="1" shape-rendering="auto"/>
<path d="M172.3 260.5H195.7" stroke="#ffffff"/>
<path d="M246.50 251a1.1 1.9 0 1 0 2.2 0a1.1 1.9 0 1 0 -2.2 0M249.10 251a1.1 1.9 0 1 0 2.2 0a1.1 1.9 0 1 0 -2.2 0M251.70 251a1.1 1.9 0 1 0 2.2 0a1.1 1.9 0 1 0 -2.2 0M254.30 251a1.1 1.9 0 1 0 2.2 0a1.1 1.9 0 1 0 -2.2 0M256.90 251a1.1 1.9 0 1 0 2.2 0a1.1 1.9 0 1 0 -2.2 0M259.50 251a1.1 1.9 0 1 0 2.2 0a1.1 1.9 0 1 0 -2.2 0M262.10 251a1.1 1.9 0 1 0 2.2 0a1.1 1.9 0 1 0 -2.2 0M264.70 251a1.1 1.9 0 1 0 2.2 0a1.1 1.9 0 1 0 -2.2 0M267.30 251a1.1 1.9 0 1 0 2.2 0a1.1 1.9 0 1 0 -2.2 0" fill="none" stroke="#ffffff" stroke-width="1" shape-rendering="auto"/>
<path d="M246.3 254.5H269.7" stroke="#ffffff"/>
<path d="M277.50 251a1.1 1.9 0 1 0 2.2 0a1.1 1.9 0 1 0 -2.2 0M280.10 251a1.1 1.9 0 1 0 2.2 0a1.1 1.9 0 1 0 -2.2 0M282.70 251a1.1 1.9 0 1 0 2.2 0a1.1 1.9 0 1 0 -2.2 0M285.30 251a1.1 1.9 0 1 0 2.2 0a1.1 1.9 0 1 0 -2.2 0M287.90 251a1.1 1.9 0 1 0 2.2 0a1.1 1.9 0 1 0 -2.2 0M290.50 251a1.1 1.9 0 1 0 2.2 0a1.1 1.9 0 1 0 -2.2 0M293.10 251a1.1 1.9 0 1 0 2.2 0a1.1 1.9 0 1 0 -2.2 0M295.70 251a1.1 1.9 0 1 0 2.2 0a1.1 1.9 0 1 0 -2.2 0M298.30 251a1.1 1.9 0 1 0 2.2 0a1.1 1.9 0 1 0 -2.2 0" fill="none" stroke="#ffffff" stroke-width="1" shape-rendering="auto"/>
<path d="M277.3 254.5H300.7" stroke="#ffffff"/>
<path d="M361.00 244.5a1.1 1.9 0 1 0 2.2 0a1.1 1.9 0 1 0 -2.2 0M363.60 244.5a1.1 1.9 0 1 0 2.2 0a1.1 1.9 0 1 0 -2.2 0M366.20 244.5a1.1 1.9 0 1 0 2.2 0a1.1 1.9 0 1 0 -2.2 0M368.80 244.5a1.1 1.9 0 1 0 2.2 0a1.1 1.9 0 1 0 -2.2 0M371.40 244.5a1.1 1.9 0 1 0 2.2 0a1.1 1.9 0 1 0 -2.2 0M374.00 244.5a1.1 1.9 0 1 0 2.2 0a1.1 1.9 0 1 0 -2.2 0M376.60 244.5a1.1 1.9 0 1 0 2.2 0a1.1 1.9 0 1 0 -2.2 0M379.20 244.5a1.1 1.9 0 1 0 2.2 0a1.1 1.9 0 1 0 -2.2 0M381.80 244.5a1.1 1.9 0 1 0 2.2 0a1.1 1.9 0 1 0 -2.2 0" fill="none" stroke="#ffffff" stroke-width="1" shape-rendering="auto"/>
<path d="M360.8 247.5H384.2" stroke="#ffffff"/>
<path d="M477.50 238.5a1.1 1.9 0 1 0 2.2 0a1.1 1.9 0 1 0 -2.2 0M480.10 238.5a1.1 1.9 0 1 0 2.2 0a1.1 1.9 0 1 0 -2.2 0M482.70 238.5a1.1 1.9 0 1 0 2.2 0a1.1 1.9 0 1 0 -2.2 0M485.30 238.5a1.1 1.9 0 1 0 2.2 0a1.1 1.9 0 1 0 -2.2 0M487.90 238.5a1.1 1.9 0 1 0 2.2 0a1.1 1.9 0 1 0 -2.2 0M490.50 238.5a1.1 1.9 0 1 0 2.2 0a1.1 1.9 0 1 0 -2.2 0M493.10 238.5a1.1 1.9 0 1 0 2.2 0a1.1 1.9 0 1 0 -2.2 0M495.70 238.5a1.1 1.9 0 1 0 2.2 0a1.1 1.9 0 1 0 -2.2 0M498.30 238.5a1.1 1.9 0 1 0 2.2 0a1.1 1.9 0 1 0 -2.2 0" fill="none" stroke="#ffffff" stroke-width="1" shape-rendering="auto"/>
<path d="M477.3 241.5H500.7" stroke="#ffffff"/>
<path d="M172.50 348a1.1 1.9 0 1 0 2.2 0a1.1 1.9 0 1 0 -2.2 0M175.10 348a1.1 1.9 0 1 0 2.2 0a1.1 1.9 0 1 0 -2.2 0M177.70 348a1.1 1.9 0 1 0 2.2 0a1.1 1.9 0 1 0 -2.2 0M180.30 348a1.1 1.9 0 1 0 2.2 0a1.1 1.9 0 1 0 -2.2 0M182.90 348a1.1 1.9 0 1 0 2.2 0a1.1 1.9 0 1 0 -2.2 0M185.50 348a1.1 1.9 0 1 0 2.2 0a1.1 1.9 0 1 0 -2.2 0M188.10 348a1.1 1.9 0 1 0 2.2 0a1.1 1.9 0 1 0 -2.2 0M190.70 348a1.1 1.9 0 1 0 2.2 0a1.1 1.9 0 1 0 -2.2 0M193.30 348a1.1 1.9 0 1 0 2.2 0a1.1 1.9 0 1 0 -2.2 0" fill="none" stroke="#ffffff" stroke-width="1" shape-rendering="auto"/>
<path d="M172.3 351.5H195.7" stroke="#ffffff"/>
<path d="M249.50 344a1.1 1.9 0 1 0 2.2 0a1.1 1.9 0 1 0 -2.2 0M252.10 344a1.1 1.9 0 1 0 2.2 0a1.1 1.9 0 1 0 -2.2 0M254.70 344a1.1 1.9 0 1 0 2.2 0a1.1 1.9 0 1 0 -2.2 0M257.30 344a1.1 1.9 0 1 0 2.2 0a1.1 1.9 0 1 0 -2.2 0M259.90 344a1.1 1.9 0 1 0 2.2 0a1.1 1.9 0 1 0 -2.2 0M262.50 344a1.1 1.9 0 1 0 2.2 0a1.1 1.9 0 1 0 -2.2 0M265.10 344a1.1 1.9 0 1 0 2.2 0a1.1 1.9 0 1 0 -2.2 0M267.70 344a1.1 1.9 0 1 0 2.2 0a1.1 1.9 0 1 0 -2.2 0M270.30 344a1.1 1.9 0 1 0 2.2 0a1.1 1.9 0 1 0 -2.2 0" fill="none" stroke="#ffffff" stroke-width="1" shape-rendering="auto"/>
<path d="M249.3 347.5H272.7" stroke="#ffffff"/>
<path d="M389.50 337a1.1 1.9 0 1 0 2.2 0a1.1 1.9 0 1 0 -2.2 0M392.10 337a1.1 1.9 0 1 0 2.2 0a1.1 1.9 0 1 0 -2.2 0M394.70 337a1.1 1.9 0 1 0 2.2 0a1.1 1.9 0 1 0 -2.2 0M397.30 337a1.1 1.9 0 1 0 2.2 0a1.1 1.9 0 1 0 -2.2 0M399.90 337a1.1 1.9 0 1 0 2.2 0a1.1 1.9 0 1 0 -2.2 0M402.50 337a1.1 1.9 0 1 0 2.2 0a1.1 1.9 0 1 0 -2.2 0M405.10 337a1.1 1.9 0 1 0 2.2 0a1.1 1.9 0 1 0 -2.2 0M407.70 337a1.1 1.9 0 1 0 2.2 0a1.1 1.9 0 1 0 -2.2 0M410.30 337a1.1 1.9 0 1 0 2.2 0a1.1 1.9 0 1 0 -2.2 0" fill="none" stroke="#ffffff" stroke-width="1" shape-rendering="auto"/>
<path d="M389.3 340.5H412.7" stroke="#ffffff"/>
<path d="M477.50 332a1.1 1.9 0 1 0 2.2 0a1.1 1.9 0 1 0 -2.2 0M480.10 332a1.1 1.9 0 1 0 2.2 0a1.1 1.9 0 1 0 -2.2 0M482.70 332a1.1 1.9 0 1 0 2.2 0a1.1 1.9 0 1 0 -2.2 0M485.30 332a1.1 1.9 0 1 0 2.2 0a1.1 1.9 0 1 0 -2.2 0M487.90 332a1.1 1.9 0 1 0 2.2 0a1.1 1.9 0 1 0 -2.2 0M490.50 332a1.1 1.9 0 1 0 2.2 0a1.1 1.9 0 1 0 -2.2 0M493.10 332a1.1 1.9 0 1 0 2.2 0a1.1 1.9 0 1 0 -2.2 0M495.70 332a1.1 1.9 0 1 0 2.2 0a1.1 1.9 0 1 0 -2.2 0M498.30 332a1.1 1.9 0 1 0 2.2 0a1.1 1.9 0 1 0 -2.2 0" fill="none" stroke="#ffffff" stroke-width="1" shape-rendering="auto"/>
<path d="M477.3 335.5H500.7" stroke="#ffffff"/>
<path d="M709.00 214.5a1.1 1.9 0 1 0 2.2 0a1.1 1.9 0 1 0 -2.2 0M711.60 214.5a1.1 1.9 0 1 0 2.2 0a1.1 1.9 0 1 0 -2.2 0M714.20 214.5a1.1 1.9 0 1 0 2.2 0a1.1 1.9 0 1 0 -2.2 0M716.80 214.5a1.1 1.9 0 1 0 2.2 0a1.1 1.9 0 1 0 -2.2 0M719.40 214.5a1.1 1.9 0 1 0 2.2 0a1.1 1.9 0 1 0 -2.2 0" fill="none" stroke="#ffffff" stroke-width="1" shape-rendering="auto"/>
<path d="M820.70 214.5a1.1 1.9 0 1 0 2.2 0a1.1 1.9 0 1 0 -2.2 0M823.30 214.5a1.1 1.9 0 1 0 2.2 0a1.1 1.9 0 1 0 -2.2 0M825.90 214.5a1.1 1.9 0 1 0 2.2 0a1.1 1.9 0 1 0 -2.2 0M828.50 214.5a1.1 1.9 0 1 0 2.2 0a1.1 1.9 0 1 0 -2.2 0M831.10 214.5a1.1 1.9 0 1 0 2.2 0a1.1 1.9 0 1 0 -2.2 0" fill="none" stroke="#ffffff" stroke-width="1" shape-rendering="auto"/>
<path d="M882.00 214.5a1.1 1.9 0 1 0 2.2 0a1.1 1.9 0 1 0 -2.2 0M884.60 214.5a1.1 1.9 0 1 0 2.2 0a1.1 1.9 0 1 0 -2.2 0M887.20 214.5a1.1 1.9 0 1 0 2.2 0a1.1 1.9 0 1 0 -2.2 0" fill="none" stroke="#ffffff" stroke-width="1" shape-rendering="auto"/>
<path d="M932.20 214.5a1.1 1.9 0 1 0 2.2 0a1.1 1.9 0 1 0 -2.2 0M934.80 214.5a1.1 1.9 0 1 0 2.2 0a1.1 1.9 0 1 0 -2.2 0M937.40 214.5a1.1 1.9 0 1 0 2.2 0a1.1 1.9 0 1 0 -2.2 0M940.00 214.5a1.1 1.9 0 1 0 2.2 0a1.1 1.9 0 1 0 -2.2 0" fill="none" stroke="#ffffff" stroke-width="1" shape-rendering="auto"/>
<path d="M816.50 205.5a1.1 1.9 0 1 0 2.2 0a1.1 1.9 0 1 0 -2.2 0M819.10 205.5a1.1 1.9 0 1 0 2.2 0a1.1 1.9 0 1 0 -2.2 0M821.70 205.5a1.1 1.9 0 1 0 2.2 0a1.1 1.9 0 1 0 -2.2 0M824.30 205.5a1.1 1.9 0 1 0 2.2 0a1.1 1.9 0 1 0 -2.2 0" fill="none" stroke="#ffffff" stroke-width="1" shape-rendering="auto"/>
<path d="M708.60 381a1.1 1.9 0 1 0 2.2 0a1.1 1.9 0 1 0 -2.2 0M711.20 381a1.1 1.9 0 1 0 2.2 0a1.1 1.9 0 1 0 -2.2 0M713.80 381a1.1 1.9 0 1 0 2.2 0a1.1 1.9 0 1 0 -2.2 0M716.40 381a1.1 1.9 0 1 0 2.2 0a1.1 1.9 0 1 0 -2.2 0" fill="none" stroke="#ffffff" stroke-width="1" shape-rendering="auto"/>
<path d="M768.90 380a1.1 1.9 0 1 0 2.2 0a1.1 1.9 0 1 0 -2.2 0M771.50 380a1.1 1.9 0 1 0 2.2 0a1.1 1.9 0 1 0 -2.2 0M774.10 380a1.1 1.9 0 1 0 2.2 0a1.1 1.9 0 1 0 -2.2 0" fill="none" stroke="#ffffff" stroke-width="1" shape-rendering="auto"/>
<path d="M820.30 381a1.1 1.9 0 1 0 2.2 0a1.1 1.9 0 1 0 -2.2 0M822.90 381a1.1 1.9 0 1 0 2.2 0a1.1 1.9 0 1 0 -2.2 0M825.50 381a1.1 1.9 0 1 0 2.2 0a1.1 1.9 0 1 0 -2.2 0M828.10 381a1.1 1.9 0 1 0 2.2 0a1.1 1.9 0 1 0 -2.2 0M830.70 381a1.1 1.9 0 1 0 2.2 0a1.1 1.9 0 1 0 -2.2 0" fill="none" stroke="#ffffff" stroke-width="1" shape-rendering="auto"/>
<path d="M931.30 381a1.1 1.9 0 1 0 2.2 0a1.1 1.9 0 1 0 -2.2 0M933.90 381a1.1 1.9 0 1 0 2.2 0a1.1 1.9 0 1 0 -2.2 0M936.50 381a1.1 1.9 0 1 0 2.2 0a1.1 1.9 0 1 0 -2.2 0M939.10 381a1.1 1.9 0 1 0 2.2 0a1.1 1.9 0 1 0 -2.2 0" fill="none" stroke="#ffffff" stroke-width="1" shape-rendering="auto"/>
<path d="M817.40 390a1.1 1.9 0 1 0 2.2 0a1.1 1.9 0 1 0 -2.2 0M820.00 390a1.1 1.9 0 1 0 2.2 0a1.1 1.9 0 1 0 -2.2 0M822.60 390a1.1 1.9 0 1 0 2.2 0a1.1 1.9 0 1 0 -2.2 0M825.20 390a1.1 1.9 0 1 0 2.2 0a1.1 1.9 0 1 0 -2.2 0" fill="none" stroke="#ffffff" stroke-width="1" shape-rendering="auto"/>
<path d="M644.40 249a1.1 1.9 0 1 0 2.2 0a1.1 1.9 0 1 0 -2.2 0M647.00 249a1.1 1.9 0 1 0 2.2 0a1.1 1.9 0 1 0 -2.2 0M649.60 249a1.1 1.9 0 1 0 2.2 0a1.1 1.9 0 1 0 -2.2 0M652.20 249a1.1 1.9 0 1 0 2.2 0a1.1 1.9 0 1 0 -2.2 0M654.80 249a1.1 1.9 0 1 0 2.2 0a1.1 1.9 0 1 0 -2.2 0M657.40 249a1.1 1.9 0 1 0 2.2 0a1.1 1.9 0 1 0 -2.2 0M660.00 249a1.1 1.9 0 1 0 2.2 0a1.1 1.9 0 1 0 -2.2 0M662.60 249a1.1 1.9 0 1 0 2.2 0a1.1 1.9 0 1 0 -2.2 0" fill="none" stroke="#ffffff" stroke-width="1" shape-rendering="auto" transform="rotate(-90 654.6 249)"/>
<path d="M762.90 242.5a1.1 1.9 0 1 0 2.2 0a1.1 1.9 0 1 0 -2.2 0M765.50 242.5a1.1 1.9 0 1 0 2.2 0a1.1 1.9 0 1 0 -2.2 0M768.10 242.5a1.1 1.9 0 1 0 2.2 0a1.1 1.9 0 1 0 -2.2 0M770.70 242.5a1.1 1.9 0 1 0 2.2 0a1.1 1.9 0 1 0 -2.2 0M773.30 242.5a1.1 1.9 0 1 0 2.2 0a1.1 1.9 0 1 0 -2.2 0M775.90 242.5a1.1 1.9 0 1 0 2.2 0a1.1 1.9 0 1 0 -2.2 0M778.50 242.5a1.1 1.9 0 1 0 2.2 0a1.1 1.9 0 1 0 -2.2 0" fill="none" stroke="#ffffff" stroke-width="1" shape-rendering="auto" transform="rotate(-90 771.8 242.5)"/>
<path d="M873.00 235.5a1.1 1.9 0 1 0 2.2 0a1.1 1.9 0 1 0 -2.2 0M875.60 235.5a1.1 1.9 0 1 0 2.2 0a1.1 1.9 0 1 0 -2.2 0M878.20 235.5a1.1 1.9 0 1 0 2.2 0a1.1 1.9 0 1 0 -2.2 0M880.80 235.5a1.1 1.9 0 1 0 2.2 0a1.1 1.9 0 1 0 -2.2 0M883.40 235.5a1.1 1.9 0 1 0 2.2 0a1.1 1.9 0 1 0 -2.2 0M886.00 235.5a1.1 1.9 0 1 0 2.2 0a1.1 1.9 0 1 0 -2.2 0M888.60 235.5a1.1 1.9 0 1 0 2.2 0a1.1 1.9 0 1 0 -2.2 0M891.20 235.5a1.1 1.9 0 1 0 2.2 0a1.1 1.9 0 1 0 -2.2 0" fill="none" stroke="#ffffff" stroke-width="1" shape-rendering="auto" transform="rotate(-90 883.2 235.5)"/>
<path d="M975.80 230a1.1 1.9 0 1 0 2.2 0a1.1 1.9 0 1 0 -2.2 0M978.40 230a1.1 1.9 0 1 0 2.2 0a1.1 1.9 0 1 0 -2.2 0M981.00 230a1.1 1.9 0 1 0 2.2 0a1.1 1.9 0 1 0 -2.2 0M983.60 230a1.1 1.9 0 1 0 2.2 0a1.1 1.9 0 1 0 -2.2 0M986.20 230a1.1 1.9 0 1 0 2.2 0a1.1 1.9 0 1 0 -2.2 0M988.80 230a1.1 1.9 0 1 0 2.2 0a1.1 1.9 0 1 0 -2.2 0M991.40 230a1.1 1.9 0 1 0 2.2 0a1.1 1.9 0 1 0 -2.2 0M994.00 230a1.1 1.9 0 1 0 2.2 0a1.1 1.9 0 1 0 -2.2 0" fill="none" stroke="#ffffff" stroke-width="1" shape-rendering="auto" transform="rotate(-90 986 230)"/>
<path d="M1014.30 287a1.1 1.9 0 1 0 2.2 0a1.1 1.9 0 1 0 -2.2 0M1016.90 287a1.1 1.9 0 1 0 2.2 0a1.1 1.9 0 1 0 -2.2 0M1019.50 287a1.1 1.9 0 1 0 2.2 0a1.1 1.9 0 1 0 -2.2 0" fill="none" stroke="#ffffff" stroke-width="1" shape-rendering="auto" transform="rotate(-90 1018 287)"/>
<path d="M623.30 305a1.1 1.9 0 1 0 2.2 0a1.1 1.9 0 1 0 -2.2 0M625.90 305a1.1 1.9 0 1 0 2.2 0a1.1 1.9 0 1 0 -2.2 0M628.50 305a1.1 1.9 0 1 0 2.2 0a1.1 1.9 0 1 0 -2.2 0" fill="none" stroke="#ffffff" stroke-width="1" shape-rendering="auto" transform="rotate(-90 627 305)"/>
<path d="M762.30 300a1.1 1.9 0 1 0 2.2 0a1.1 1.9 0 1 0 -2.2 0M764.90 300a1.1 1.9 0 1 0 2.2 0a1.1 1.9 0 1 0 -2.2 0M767.50 300a1.1 1.9 0 1 0 2.2 0a1.1 1.9 0 1 0 -2.2 0" fill="none" stroke="#ffffff" stroke-width="1" shape-rendering="auto" transform="rotate(-90 766 300)"/>
<path d="M777.30 300a1.1 1.9 0 1 0 2.2 0a1.1 1.9 0 1 0 -2.2 0M779.90 300a1.1 1.9 0 1 0 2.2 0a1.1 1.9 0 1 0 -2.2 0M782.50 300a1.1 1.9 0 1 0 2.2 0a1.1 1.9 0 1 0 -2.2 0" fill="none" stroke="#ffffff" stroke-width="1" shape-rendering="auto" transform="rotate(-90 781 300)"/>
<path d="M874.30 294a1.1 1.9 0 1 0 2.2 0a1.1 1.9 0 1 0 -2.2 0M876.90 294a1.1 1.9 0 1 0 2.2 0a1.1 1.9 0 1 0 -2.2 0M879.50 294a1.1 1.9 0 1 0 2.2 0a1.1 1.9 0 1 0 -2.2 0" fill="none" stroke="#ffffff" stroke-width="1" shape-rendering="auto" transform="rotate(-90 878 294)"/>
<path d="M888.30 294a1.1 1.9 0 1 0 2.2 0a1.1 1.9 0 1 0 -2.2 0M890.90 294a1.1 1.9 0 1 0 2.2 0a1.1 1.9 0 1 0 -2.2 0M893.50 294a1.1 1.9 0 1 0 2.2 0a1.1 1.9 0 1 0 -2.2 0" fill="none" stroke="#ffffff" stroke-width="1" shape-rendering="auto" transform="rotate(-90 892 294)"/>
<path d="M657.50 255a1.1 1.9 0 1 0 2.2 0a1.1 1.9 0 1 0 -2.2 0M660.10 255a1.1 1.9 0 1 0 2.2 0a1.1 1.9 0 1 0 -2.2 0M662.70 255a1.1 1.9 0 1 0 2.2 0a1.1 1.9 0 1 0 -2.2 0M665.30 255a1.1 1.9 0 1 0 2.2 0a1.1 1.9 0 1 0 -2.2 0M667.90 255a1.1 1.9 0 1 0 2.2 0a1.1 1.9 0 1 0 -2.2 0M670.50 255a1.1 1.9 0 1 0 2.2 0a1.1 1.9 0 1 0 -2.2 0M673.10 255a1.1 1.9 0 1 0 2.2 0a1.1 1.9 0 1 0 -2.2 0M675.70 255a1.1 1.9 0 1 0 2.2 0a1.1 1.9 0 1 0 -2.2 0M678.30 255a1.1 1.9 0 1 0 2.2 0a1.1 1.9 0 1 0 -2.2 0" fill="none" stroke="#ffffff" stroke-width="1" shape-rendering="auto"/>
<path d="M657.3 258.5H680.7" stroke="#ffffff"/>
<path d="M748.50 248.5a1.1 1.9 0 1 0 2.2 0a1.1 1.9 0 1 0 -2.2 0M751.10 248.5a1.1 1.9 0 1 0 2.2 0a1.1 1.9 0 1 0 -2.2 0M753.70 248.5a1.1 1.9 0 1 0 2.2 0a1.1 1.9 0 1 0 -2.2 0M756.30 248.5a1.1 1.9 0 1 0 2.2 0a1.1 1.9 0 1 0 -2.2 0M758.90 248.5a1.1 1.9 0 1 0 2.2 0a1.1 1.9 0 1 0 -2.2 0M761.50 248.5a1.1 1.9 0 1 0 2.2 0a1.1 1.9 0 1 0 -2.2 0M764.10 248.5a1.1 1.9 0 1 0 2.2 0a1.1 1.9 0 1 0 -2.2 0M766.70 248.5a1.1 1.9 0 1 0 2.2 0a1.1 1.9 0 1 0 -2.2 0M769.30 248.5a1.1 1.9 0 1 0 2.2 0a1.1 1.9 0 1 0 -2.2 0" fill="none" stroke="#ffffff" stroke-width="1" shape-rendering="auto"/>
<path d="M748.3 251.5H771.7" stroke="#ffffff"/>
<path d="M857.50 243.5a1.1 1.9 0 1 0 2.2 0a1.1 1.9 0 1 0 -2.2 0M860.10 243.5a1.1 1.9 0 1 0 2.2 0a1.1 1.9 0 1 0 -2.2 0M862.70 243.5a1.1 1.9 0 1 0 2.2 0a1.1 1.9 0 1 0 -2.2 0M865.30 243.5a1.1 1.9 0 1 0 2.2 0a1.1 1.9 0 1 0 -2.2 0M867.90 243.5a1.1 1.9 0 1 0 2.2 0a1.1 1.9 0 1 0 -2.2 0M870.50 243.5a1.1 1.9 0 1 0 2.2 0a1.1 1.9 0 1 0 -2.2 0M873.10 243.5a1.1 1.9 0 1 0 2.2 0a1.1 1.9 0 1 0 -2.2 0M875.70 243.5a1.1 1.9 0 1 0 2.2 0a1.1 1.9 0 1 0 -2.2 0M878.30 243.5a1.1 1.9 0 1 0 2.2 0a1.1 1.9 0 1 0 -2.2 0" fill="none" stroke="#ffffff" stroke-width="1" shape-rendering="auto"/>
<path d="M857.3 246.5H880.7" stroke="#ffffff"/>
<path d="M888.50 243.5a1.1 1.9 0 1 0 2.2 0a1.1 1.9 0 1 0 -2.2 0M891.10 243.5a1.1 1.9 0 1 0 2.2 0a1.1 1.9 0 1 0 -2.2 0M893.70 243.5a1.1 1.9 0 1 0 2.2 0a1.1 1.9 0 1 0 -2.2 0M896.30 243.5a1.1 1.9 0 1 0 2.2 0a1.1 1.9 0 1 0 -2.2 0M898.90 243.5a1.1 1.9 0 1 0 2.2 0a1.1 1.9 0 1 0 -2.2 0M901.50 243.5a1.1 1.9 0 1 0 2.2 0a1.1 1.9 0 1 0 -2.2 0M904.10 243.5a1.1 1.9 0 1 0 2.2 0a1.1 1.9 0 1 0 -2.2 0M906.70 243.5a1.1 1.9 0 1 0 2.2 0a1.1 1.9 0 1 0 -2.2 0M909.30 243.5a1.1 1.9 0 1 0 2.2 0a1.1 1.9 0 1 0 -2.2 0" fill="none" stroke="#ffffff" stroke-width="1" shape-rendering="auto"/>
<path d="M888.3 246.5H911.7" stroke="#ffffff"/>
<path d="M962.50 237.5a1.1 1.9 0 1 0 2.2 0a1.1 1.9 0 1 0 -2.2 0M965.10 237.5a1.1 1.9 0 1 0 2.2 0a1.1 1.9 0 1 0 -2.2 0M967.70 237.5a1.1 1.9 0 1 0 2.2 0a1.1 1.9 0 1 0 -2.2 0M970.30 237.5a1.1 1.9 0 1 0 2.2 0a1.1 1.9 0 1 0 -2.2 0M972.90 237.5a1.1 1.9 0 1 0 2.2 0a1.1 1.9 0 1 0 -2.2 0M975.50 237.5a1.1 1.9 0 1 0 2.2 0a1.1 1.9 0 1 0 -2.2 0M978.10 237.5a1.1 1.9 0 1 0 2.2 0a1.1 1.9 0 1 0 -2.2 0M980.70 237.5a1.1 1.9 0 1 0 2.2 0a1.1 1.9 0 1 0 -2.2 0M983.30 237.5a1.1 1.9 0 1 0 2.2 0a1.1 1.9 0 1 0 -2.2 0" fill="none" stroke="#ffffff" stroke-width="1" shape-rendering="auto"/>
<path d="M962.3 240.5H985.7" stroke="#ffffff"/>
<path d="M657.00 347a1.1 1.9 0 1 0 2.2 0a1.1 1.9 0 1 0 -2.2 0M659.60 347a1.1 1.9 0 1 0 2.2 0a1.1 1.9 0 1 0 -2.2 0M662.20 347a1.1 1.9 0 1 0 2.2 0a1.1 1.9 0 1 0 -2.2 0M664.80 347a1.1 1.9 0 1 0 2.2 0a1.1 1.9 0 1 0 -2.2 0M667.40 347a1.1 1.9 0 1 0 2.2 0a1.1 1.9 0 1 0 -2.2 0M670.00 347a1.1 1.9 0 1 0 2.2 0a1.1 1.9 0 1 0 -2.2 0M672.60 347a1.1 1.9 0 1 0 2.2 0a1.1 1.9 0 1 0 -2.2 0M675.20 347a1.1 1.9 0 1 0 2.2 0a1.1 1.9 0 1 0 -2.2 0M677.80 347a1.1 1.9 0 1 0 2.2 0a1.1 1.9 0 1 0 -2.2 0" fill="none" stroke="#ffffff" stroke-width="1" shape-rendering="auto"/>
<path d="M656.8 350.5H680.2" stroke="#ffffff"/>
<path d="M746.00 342a1.1 1.9 0 1 0 2.2 0a1.1 1.9 0 1 0 -2.2 0M748.60 342a1.1 1.9 0 1 0 2.2 0a1.1 1.9 0 1 0 -2.2 0M751.20 342a1.1 1.9 0 1 0 2.2 0a1.1 1.9 0 1 0 -2.2 0M753.80 342a1.1 1.9 0 1 0 2.2 0a1.1 1.9 0 1 0 -2.2 0M756.40 342a1.1 1.9 0 1 0 2.2 0a1.1 1.9 0 1 0 -2.2 0M759.00 342a1.1 1.9 0 1 0 2.2 0a1.1 1.9 0 1 0 -2.2 0M761.60 342a1.1 1.9 0 1 0 2.2 0a1.1 1.9 0 1 0 -2.2 0M764.20 342a1.1 1.9 0 1 0 2.2 0a1.1 1.9 0 1 0 -2.2 0M766.80 342a1.1 1.9 0 1 0 2.2 0a1.1 1.9 0 1 0 -2.2 0" fill="none" stroke="#ffffff" stroke-width="1" shape-rendering="auto"/>
<path d="M745.8 345.5H769.2" stroke="#ffffff"/>
<path d="M777.00 342a1.1 1.9 0 1 0 2.2 0a1.1 1.9 0 1 0 -2.2 0M779.60 342a1.1 1.9 0 1 0 2.2 0a1.1 1.9 0 1 0 -2.2 0M782.20 342a1.1 1.9 0 1 0 2.2 0a1.1 1.9 0 1 0 -2.2 0M784.80 342a1.1 1.9 0 1 0 2.2 0a1.1 1.9 0 1 0 -2.2 0M787.40 342a1.1 1.9 0 1 0 2.2 0a1.1 1.9 0 1 0 -2.2 0M790.00 342a1.1 1.9 0 1 0 2.2 0a1.1 1.9 0 1 0 -2.2 0M792.60 342a1.1 1.9 0 1 0 2.2 0a1.1 1.9 0 1 0 -2.2 0M795.20 342a1.1 1.9 0 1 0 2.2 0a1.1 1.9 0 1 0 -2.2 0M797.80 342a1.1 1.9 0 1 0 2.2 0a1.1 1.9 0 1 0 -2.2 0" fill="none" stroke="#ffffff" stroke-width="1" shape-rendering="auto"/>
<path d="M776.8 345.5H800.2" stroke="#ffffff"/>
<path d="M859.50 338a1.1 1.9 0 1 0 2.2 0a1.1 1.9 0 1 0 -2.2 0M862.10 338a1.1 1.9 0 1 0 2.2 0a1.1 1.9 0 1 0 -2.2 0M864.70 338a1.1 1.9 0 1 0 2.2 0a1.1 1.9 0 1 0 -2.2 0M867.30 338a1.1 1.9 0 1 0 2.2 0a1.1 1.9 0 1 0 -2.2 0M869.90 338a1.1 1.9 0 1 0 2.2 0a1.1 1.9 0 1 0 -2.2 0M872.50 338a1.1 1.9 0 1 0 2.2 0a1.1 1.9 0 1 0 -2.2 0M875.10 338a1.1 1.9 0 1 0 2.2 0a1.1 1.9 0 1 0 -2.2 0M877.70 338a1.1 1.9 0 1 0 2.2 0a1.1 1.9 0 1 0 -2.2 0M880.30 338a1.1 1.9 0 1 0 2.2 0a1.1 1.9 0 1 0 -2.2 0" fill="none" stroke="#ffffff" stroke-width="1" shape-rendering="auto"/>
<path d="M859.3 341.5H882.7" stroke="#ffffff"/>
<path d="M962.50 331a1.1 1.9 0 1 0 2.2 0a1.1 1.9 0 1 0 -2.2 0M965.10 331a1.1 1.9 0 1 0 2.2 0a1.1 1.9 0 1 0 -2.2 0M967.70 331a1.1 1.9 0 1 0 2.2 0a1.1 1.9 0 1 0 -2.2 0M970.30 331a1.1 1.9 0 1 0 2.2 0a1.1 1.9 0 1 0 -2.2 0M972.90 331a1.1 1.9 0 1 0 2.2 0a1.1 1.9 0 1 0 -2.2 0M975.50 331a1.1 1.9 0 1 0 2.2 0a1.1 1.9 0 1 0 -2.2 0M978.10 331a1.1 1.9 0 1 0 2.2 0a1.1 1.9 0 1 0 -2.2 0M980.70 331a1.1 1.9 0 1 0 2.2 0a1.1 1.9 0 1 0 -2.2 0M983.30 331a1.1 1.9 0 1 0 2.2 0a1.1 1.9 0 1 0 -2.2 0" fill="none" stroke="#ffffff" stroke-width="1" shape-rendering="auto"/>
<path d="M962.3 334.5H985.7" stroke="#ffffff"/>
<path d="M215.50 557a1.1 1.9 0 1 0 2.2 0a1.1 1.9 0 1 0 -2.2 0M218.10 557a1.1 1.9 0 1 0 2.2 0a1.1 1.9 0 1 0 -2.2 0M220.70 557a1.1 1.9 0 1 0 2.2 0a1.1 1.9 0 1 0 -2.2 0M223.30 557a1.1 1.9 0 1 0 2.2 0a1.1 1.9 0 1 0 -2.2 0" fill="none" stroke="#ffffff" stroke-width="1" shape-rendering="auto"/>
<path d="M425.00 522a1.1 1.9 0 1 0 2.2 0a1.1 1.9 0 1 0 -2.2 0M427.60 522a1.1 1.9 0 1 0 2.2 0a1.1 1.9 0 1 0 -2.2 0M430.20 522a1.1 1.9 0 1 0 2.2 0a1.1 1.9 0 1 0 -2.2 0M432.80 522a1.1 1.9 0 1 0 2.2 0a1.1 1.9 0 1 0 -2.2 0M435.40 522a1.1 1.9 0 1 0 2.2 0a1.1 1.9 0 1 0 -2.2 0" fill="none" stroke="#ffffff" stroke-width="1" shape-rendering="auto"/>
<path d="M225.40 726a1.1 1.9 0 1 0 2.2 0a1.1 1.9 0 1 0 -2.2 0M228.00 726a1.1 1.9 0 1 0 2.2 0a1.1 1.9 0 1 0 -2.2 0M230.60 726a1.1 1.9 0 1 0 2.2 0a1.1 1.9 0 1 0 -2.2 0M233.20 726a1.1 1.9 0 1 0 2.2 0a1.1 1.9 0 1 0 -2.2 0" fill="none" stroke="#ffffff" stroke-width="1" shape-rendering="auto"/>
<path d="M436.20 685.5a1.1 1.9 0 1 0 2.2 0a1.1 1.9 0 1 0 -2.2 0M438.80 685.5a1.1 1.9 0 1 0 2.2 0a1.1 1.9 0 1 0 -2.2 0M441.40 685.5a1.1 1.9 0 1 0 2.2 0a1.1 1.9 0 1 0 -2.2 0M444.00 685.5a1.1 1.9 0 1 0 2.2 0a1.1 1.9 0 1 0 -2.2 0" fill="none" stroke="#ffffff" stroke-width="1" shape-rendering="auto"/>
<path d="M306.00 541.5a1.1 1.9 0 1 0 2.2 0a1.1 1.9 0 1 0 -2.2 0M308.60 541.5a1.1 1.9 0 1 0 2.2 0a1.1 1.9 0 1 0 -2.2 0M311.20 541.5a1.1 1.9 0 1 0 2.2 0a1.1 1.9 0 1 0 -2.2 0M313.80 541.5a1.1 1.9 0 1 0 2.2 0a1.1 1.9 0 1 0 -2.2 0" fill="none" stroke="#ffffff" stroke-width="1" shape-rendering="auto" transform="rotate(-20 311 541.5)"/>
<path d="M344.00 703a1.1 1.9 0 1 0 2.2 0a1.1 1.9 0 1 0 -2.2 0M346.60 703a1.1 1.9 0 1 0 2.2 0a1.1 1.9 0 1 0 -2.2 0M349.20 703a1.1 1.9 0 1 0 2.2 0a1.1 1.9 0 1 0 -2.2 0M351.80 703a1.1 1.9 0 1 0 2.2 0a1.1 1.9 0 1 0 -2.2 0" fill="none" stroke="#ffffff" stroke-width="1" shape-rendering="auto" transform="rotate(-20 349 703)"/>
<path d="M138.80 644a1.1 1.9 0 1 0 2.2 0a1.1 1.9 0 1 0 -2.2 0M141.40 644a1.1 1.9 0 1 0 2.2 0a1.1 1.9 0 1 0 -2.2 0M144.00 644a1.1 1.9 0 1 0 2.2 0a1.1 1.9 0 1 0 -2.2 0" fill="none" stroke="#ffffff" stroke-width="1" shape-rendering="auto" transform="rotate(-90 142.5 644)"/>
<path d="M255.30 643a1.1 1.9 0 1 0 2.2 0a1.1 1.9 0 1 0 -2.2 0M257.90 643a1.1 1.9 0 1 0 2.2 0a1.1 1.9 0 1 0 -2.2 0M260.50 643a1.1 1.9 0 1 0 2.2 0a1.1 1.9 0 1 0 -2.2 0" fill="none" stroke="#ffffff" stroke-width="1" shape-rendering="auto" transform="rotate(-90 259 643)"/>
<path d="M396.30 605a1.1 1.9 0 1 0 2.2 0a1.1 1.9 0 1 0 -2.2 0M398.90 605a1.1 1.9 0 1 0 2.2 0a1.1 1.9 0 1 0 -2.2 0M401.50 605a1.1 1.9 0 1 0 2.2 0a1.1 1.9 0 1 0 -2.2 0" fill="none" stroke="#ffffff" stroke-width="1" shape-rendering="auto" transform="rotate(-90 400 605)"/>
<path d="M517.10 606a1.1 1.9 0 1 0 2.2 0a1.1 1.9 0 1 0 -2.2 0M519.70 606a1.1 1.9 0 1 0 2.2 0a1.1 1.9 0 1 0 -2.2 0M522.30 606a1.1 1.9 0 1 0 2.2 0a1.1 1.9 0 1 0 -2.2 0" fill="none" stroke="#ffffff" stroke-width="1" shape-rendering="auto" transform="rotate(-90 520.8 606)"/>
<path d="M297.20 636.6a1.1 1.9 0 1 0 2.2 0a1.1 1.9 0 1 0 -2.2 0M299.80 636.6a1.1 1.9 0 1 0 2.2 0a1.1 1.9 0 1 0 -2.2 0" fill="none" stroke="#ffffff" stroke-width="1" shape-rendering="auto" transform="rotate(-90 299.6 636.6)"/>
<path d="M363.00 612a1.1 1.9 0 1 0 2.2 0a1.1 1.9 0 1 0 -2.2 0M365.60 612a1.1 1.9 0 1 0 2.2 0a1.1 1.9 0 1 0 -2.2 0" fill="none" stroke="#ffffff" stroke-width="1" shape-rendering="auto" transform="rotate(-90 365.4 612)"/>
<path d="M140.10 591.5a1.1 1.9 0 1 0 2.2 0a1.1 1.9 0 1 0 -2.2 0M142.70 591.5a1.1 1.9 0 1 0 2.2 0a1.1 1.9 0 1 0 -2.2 0" fill="none" stroke="#ffffff" stroke-width="1" shape-rendering="auto" transform="rotate(-90 142.5 591.5)"/>
<path d="M140.10 695.5a1.1 1.9 0 1 0 2.2 0a1.1 1.9 0 1 0 -2.2 0M142.70 695.5a1.1 1.9 0 1 0 2.2 0a1.1 1.9 0 1 0 -2.2 0" fill="none" stroke="#ffffff" stroke-width="1" shape-rendering="auto" transform="rotate(-90 142.5 695.5)"/>
<path d="M256.60 591.5a1.1 1.9 0 1 0 2.2 0a1.1 1.9 0 1 0 -2.2 0M259.20 591.5a1.1 1.9 0 1 0 2.2 0a1.1 1.9 0 1 0 -2.2 0" fill="none" stroke="#ffffff" stroke-width="1" shape-rendering="auto" transform="rotate(-90 259 591.5)"/>
<path d="M256.60 695.5a1.1 1.9 0 1 0 2.2 0a1.1 1.9 0 1 0 -2.2 0M259.20 695.5a1.1 1.9 0 1 0 2.2 0a1.1 1.9 0 1 0 -2.2 0" fill="none" stroke="#ffffff" stroke-width="1" shape-rendering="auto" transform="rotate(-90 259 695.5)"/>
<path d="M397.60 554.5a1.1 1.9 0 1 0 2.2 0a1.1 1.9 0 1 0 -2.2 0M400.20 554.5a1.1 1.9 0 1 0 2.2 0a1.1 1.9 0 1 0 -2.2 0" fill="none" stroke="#ffffff" stroke-width="1" shape-rendering="auto" transform="rotate(-90 400 554.5)"/>
<path d="M397.60 658a1.1 1.9 0 1 0 2.2 0a1.1 1.9 0 1 0 -2.2 0M400.20 658a1.1 1.9 0 1 0 2.2 0a1.1 1.9 0 1 0 -2.2 0" fill="none" stroke="#ffffff" stroke-width="1" shape-rendering="auto" transform="rotate(-90 400 658)"/>
<path d="M518.40 554.5a1.1 1.9 0 1 0 2.2 0a1.1 1.9 0 1 0 -2.2 0M521.00 554.5a1.1 1.9 0 1 0 2.2 0a1.1 1.9 0 1 0 -2.2 0" fill="none" stroke="#ffffff" stroke-width="1" shape-rendering="auto" transform="rotate(-90 520.8 554.5)"/>
<path d="M518.40 658a1.1 1.9 0 1 0 2.2 0a1.1 1.9 0 1 0 -2.2 0M521.00 658a1.1 1.9 0 1 0 2.2 0a1.1 1.9 0 1 0 -2.2 0" fill="none" stroke="#ffffff" stroke-width="1" shape-rendering="auto" transform="rotate(-90 520.8 658)"/>
<text x="268" y="604.3" font-size="5" fill="#ffffff" text-anchor="middle" font-family="Liberation Mono" font-weight="bold" letter-spacing="-0.8" transform="rotate(45 268 602)">XX</text>
<text x="287" y="694.3" font-size="5" fill="#ffffff" text-anchor="middle" font-family="Liberation Mono" font-weight="bold" letter-spacing="-0.8" transform="rotate(45 287 692)">XX</text>
<text x="372" y="549.3" font-size="5" fill="#ffffff" text-anchor="middle" font-family="Liberation Mono" font-weight="bold" letter-spacing="-0.8" transform="rotate(45 372 547)">XX</text>
<text x="391" y="652.3" font-size="5" fill="#ffffff" text-anchor="middle" font-family="Liberation Mono" font-weight="bold" letter-spacing="-0.8" transform="rotate(45 391 650)">XX</text>
<path d="M641.30 523a1.1 1.9 0 1 0 2.2 0a1.1 1.9 0 1 0 -2.2 0M643.90 523a1.1 1.9 0 1 0 2.2 0a1.1 1.9 0 1 0 -2.2 0M646.50 523a1.1 1.9 0 1 0 2.2 0a1.1 1.9 0 1 0 -2.2 0" fill="none" stroke="#ffffff" stroke-width="1" shape-rendering="auto"/>
<path d="M655.20 523a1.1 1.9 0 1 0 2.2 0a1.1 1.9 0 1 0 -2.2 0M657.80 523a1.1 1.9 0 1 0 2.2 0a1.1 1.9 0 1 0 -2.2 0M660.40 523a1.1 1.9 0 1 0 2.2 0a1.1 1.9 0 1 0 -2.2 0M663.00 523a1.1 1.9 0 1 0 2.2 0a1.1 1.9 0 1 0 -2.2 0" fill="none" stroke="#ffffff" stroke-width="1" shape-rendering="auto"/>
<path d="M698.80 523a1.1 1.9 0 1 0 2.2 0a1.1 1.9 0 1 0 -2.2 0M701.40 523a1.1 1.9 0 1 0 2.2 0a1.1 1.9 0 1 0 -2.2 0M704.00 523a1.1 1.9 0 1 0 2.2 0a1.1 1.9 0 1 0 -2.2 0M706.60 523a1.1 1.9 0 1 0 2.2 0a1.1 1.9 0 1 0 -2.2 0" fill="none" stroke="#ffffff" stroke-width="1" shape-rendering="auto"/>
<path d="M742.50 523a1.1 1.9 0 1 0 2.2 0a1.1 1.9 0 1 0 -2.2 0M745.10 523a1.1 1.9 0 1 0 2.2 0a1.1 1.9 0 1 0 -2.2 0M747.70 523a1.1 1.9 0 1 0 2.2 0a1.1 1.9 0 1 0 -2.2 0M750.30 523a1.1 1.9 0 1 0 2.2 0a1.1 1.9 0 1 0 -2.2 0" fill="none" stroke="#ffffff" stroke-width="1" shape-rendering="auto"/>
<path d="M758.30 523a1.1 1.9 0 1 0 2.2 0a1.1 1.9 0 1 0 -2.2 0M760.90 523a1.1 1.9 0 1 0 2.2 0a1.1 1.9 0 1 0 -2.2 0M763.50 523a1.1 1.9 0 1 0 2.2 0a1.1 1.9 0 1 0 -2.2 0" fill="none" stroke="#ffffff" stroke-width="1" shape-rendering="auto"/>
<path d="M697.50 669a1.1 1.9 0 1 0 2.2 0a1.1 1.9 0 1 0 -2.2 0M700.10 669a1.1 1.9 0 1 0 2.2 0a1.1 1.9 0 1 0 -2.2 0M702.70 669a1.1 1.9 0 1 0 2.2 0a1.1 1.9 0 1 0 -2.2 0M705.30 669a1.1 1.9 0 1 0 2.2 0a1.1 1.9 0 1 0 -2.2 0M707.90 669a1.1 1.9 0 1 0 2.2 0a1.1 1.9 0 1 0 -2.2 0" fill="none" stroke="#ffffff" stroke-width="1" shape-rendering="auto"/>
<path d="M678.10 626a1.1 1.9 0 1 0 2.2 0a1.1 1.9 0 1 0 -2.2 0M680.70 626a1.1 1.9 0 1 0 2.2 0a1.1 1.9 0 1 0 -2.2 0" fill="none" stroke="#ffffff" stroke-width="1" shape-rendering="auto"/>
<path d="M721.80 626a1.1 1.9 0 1 0 2.2 0a1.1 1.9 0 1 0 -2.2 0M724.40 626a1.1 1.9 0 1 0 2.2 0a1.1 1.9 0 1 0 -2.2 0" fill="none" stroke="#ffffff" stroke-width="1" shape-rendering="auto"/>
<path d="M605.70 594a1.1 1.9 0 1 0 2.2 0a1.1 1.9 0 1 0 -2.2 0M608.30 594a1.1 1.9 0 1 0 2.2 0a1.1 1.9 0 1 0 -2.2 0M610.90 594a1.1 1.9 0 1 0 2.2 0a1.1 1.9 0 1 0 -2.2 0M613.50 594a1.1 1.9 0 1 0 2.2 0a1.1 1.9 0 1 0 -2.2 0" fill="none" stroke="#ffffff" stroke-width="1" shape-rendering="auto" transform="rotate(-90 610.7 594)"/>
<path d="M615.70 591a1.1 1.9 0 1 0 2.2 0a1.1 1.9 0 1 0 -2.2 0M618.30 591a1.1 1.9 0 1 0 2.2 0a1.1 1.9 0 1 0 -2.2 0M620.90 591a1.1 1.9 0 1 0 2.2 0a1.1 1.9 0 1 0 -2.2 0" fill="none" stroke="#ffffff" stroke-width="1" shape-rendering="auto" transform="rotate(-90 619.4 591)"/>
<path d="M784.60 591a1.1 1.9 0 1 0 2.2 0a1.1 1.9 0 1 0 -2.2 0M787.20 591a1.1 1.9 0 1 0 2.2 0a1.1 1.9 0 1 0 -2.2 0M789.80 591a1.1 1.9 0 1 0 2.2 0a1.1 1.9 0 1 0 -2.2 0" fill="none" stroke="#ffffff" stroke-width="1" shape-rendering="auto" transform="rotate(-90 788.3 591)"/>
<path d="M792.00 594a1.1 1.9 0 1 0 2.2 0a1.1 1.9 0 1 0 -2.2 0M794.60 594a1.1 1.9 0 1 0 2.2 0a1.1 1.9 0 1 0 -2.2 0M797.20 594a1.1 1.9 0 1 0 2.2 0a1.1 1.9 0 1 0 -2.2 0M799.80 594a1.1 1.9 0 1 0 2.2 0a1.1 1.9 0 1 0 -2.2 0" fill="none" stroke="#ffffff" stroke-width="1" shape-rendering="auto" transform="rotate(-90 797 594)"/>
<path d="M617.60 633.6a1.1 1.9 0 1 0 2.2 0a1.1 1.9 0 1 0 -2.2 0M620.20 633.6a1.1 1.9 0 1 0 2.2 0a1.1 1.9 0 1 0 -2.2 0" fill="none" stroke="#ffffff" stroke-width="1" shape-rendering="auto"/>
<path d="M784.60 633.6a1.1 1.9 0 1 0 2.2 0a1.1 1.9 0 1 0 -2.2 0M787.20 633.6a1.1 1.9 0 1 0 2.2 0a1.1 1.9 0 1 0 -2.2 0" fill="none" stroke="#ffffff" stroke-width="1" shape-rendering="auto"/>
<path d="M665.10 609a1.1 1.9 0 1 0 2.2 0a1.1 1.9 0 1 0 -2.2 0M667.70 609a1.1 1.9 0 1 0 2.2 0a1.1 1.9 0 1 0 -2.2 0" fill="none" stroke="#ffffff" stroke-width="1" shape-rendering="auto"/>
<path d="M737.00 609a1.1 1.9 0 1 0 2.2 0a1.1 1.9 0 1 0 -2.2 0M739.60 609a1.1 1.9 0 1 0 2.2 0a1.1 1.9 0 1 0 -2.2 0" fill="none" stroke="#ffffff" stroke-width="1" shape-rendering="auto"/>
<path d="M873.30 523a1.1 1.9 0 1 0 2.2 0a1.1 1.9 0 1 0 -2.2 0M875.90 523a1.1 1.9 0 1 0 2.2 0a1.1 1.9 0 1 0 -2.2 0M878.50 523a1.1 1.9 0 1 0 2.2 0a1.1 1.9 0 1 0 -2.2 0" fill="none" stroke="#ffffff" stroke-width="1" shape-rendering="auto"/>
<path d="M887.20 523a1.1 1.9 0 1 0 2.2 0a1.1 1.9 0 1 0 -2.2 0M889.80 523a1.1 1.9 0 1 0 2.2 0a1.1 1.9 0 1 0 -2.2 0M892.40 523a1.1 1.9 0 1 0 2.2 0a1.1 1.9 0 1 0 -2.2 0M895.00 523a1.1 1.9 0 1 0 2.2 0a1.1 1.9 0 1 0 -2.2 0" fill="none" stroke="#ffffff" stroke-width="1" shape-rendering="auto"/>
<path d="M930.80 523a1.1 1.9 0 1 0 2.2 0a1.1 1.9 0 1 0 -2.2 0M933.40 523a1.1 1.9 0 1 0 2.2 0a1.1 1.9 0 1 0 -2.2 0M936.00 523a1.1 1.9 0 1 0 2.2 0a1.1 1.9 0 1 0 -2.2 0M938.60 523a1.1 1.9 0 1 0 2.2 0a1.1 1.9 0 1 0 -2.2 0" fill="none" stroke="#ffffff" stroke-width="1" shape-rendering="auto"/>
<path d="M974.50 523a1.1 1.9 0 1 0 2.2 0a1.1 1.9 0 1 0 -2.2 0M977.10 523a1.1 1.9 0 1 0 2.2 0a1.1 1.9 0 1 0 -2.2 0M979.70 523a1.1 1.9 0 1 0 2.2 0a1.1 1.9 0 1 0 -2.2 0M982.30 523a1.1 1.9 0 1 0 2.2 0a1.1 1.9 0 1 0 -2.2 0" fill="none" stroke="#ffffff" stroke-width="1" shape-rendering="auto"/>
<path d="M990.30 523a1.1 1.9 0 1 0 2.2 0a1.1 1.9 0 1 0 -2.2 0M992.90 523a1.1 1.9 0 1 0 2.2 0a1.1 1.9 0 1 0 -2.2 0M995.50 523a1.1 1.9 0 1 0 2.2 0a1.1 1.9 0 1 0 -2.2 0" fill="none" stroke="#ffffff" stroke-width="1" shape-rendering="auto"/>
<path d="M929.50 669a1.1 1.9 0 1 0 2.2 0a1.1 1.9 0 1 0 -2.2 0M932.10 669a1.1 1.9 0 1 0 2.2 0a1.1 1.9 0 1 0 -2.2 0M934.70 669a1.1 1.9 0 1 0 2.2 0a1.1 1.9 0 1 0 -2.2 0M937.30 669a1.1 1.9 0 1 0 2.2 0a1.1 1.9 0 1 0 -2.2 0M939.90 669a1.1 1.9 0 1 0 2.2 0a1.1 1.9 0 1 0 -2.2 0" fill="none" stroke="#ffffff" stroke-width="1" shape-rendering="auto"/>
<path d="M910.10 626a1.1 1.9 0 1 0 2.2 0a1.1 1.9 0 1 0 -2.2 0M912.70 626a1.1 1.9 0 1 0 2.2 0a1.1 1.9 0 1 0 -2.2 0" fill="none" stroke="#ffffff" stroke-width="1" shape-rendering="auto"/>
<path d="M953.80 626a1.1 1.9 0 1 0 2.2 0a1.1 1.9 0 1 0 -2.2 0M956.40 626a1.1 1.9 0 1 0 2.2 0a1.1 1.9 0 1 0 -2.2 0" fill="none" stroke="#ffffff" stroke-width="1" shape-rendering="auto"/>
<path d="M837.70 594a1.1 1.9 0 1 0 2.2 0a1.1 1.9 0 1 0 -2.2 0M840.30 594a1.1 1.9 0 1 0 2.2 0a1.1 1.9 0 1 0 -2.2 0M842.90 594a1.1 1.9 0 1 0 2.2 0a1.1 1.9 0 1 0 -2.2 0M845.50 594a1.1 1.9 0 1 0 2.2 0a1.1 1.9 0 1 0 -2.2 0" fill="none" stroke="#ffffff" stroke-width="1" shape-rendering="auto" transform="rotate(-90 842.7 594)"/>
<path d="M847.70 591a1.1 1.9 0 1 0 2.2 0a1.1 1.9 0 1 0 -2.2 0M850.30 591a1.1 1.9 0 1 0 2.2 0a1.1 1.9 0 1 0 -2.2 0M852.90 591a1.1 1.9 0 1 0 2.2 0a1.1 1.9 0 1 0 -2.2 0" fill="none" stroke="#ffffff" stroke-width="1" shape-rendering="auto" transform="rotate(-90 851.4 591)"/>
<path d="M1016.60 591a1.1 1.9 0 1 0 2.2 0a1.1 1.9 0 1 0 -2.2 0M1019.20 591a1.1 1.9 0 1 0 2.2 0a1.1 1.9 0 1 0 -2.2 0M1021.80 591a1.1 1.9 0 1 0 2.2 0a1.1 1.9 0 1 0 -2.2 0" fill="none" stroke="#ffffff" stroke-width="1" shape-rendering="auto" transform="rotate(-90 1020.3 591)"/>
<path d="M1024.00 594a1.1 1.9 0 1 0 2.2 0a1.1 1.9 0 1 0 -2.2 0M1026.60 594a1.1 1.9 0 1 0 2.2 0a1.1 1.9 0 1 0 -2.2 0M1029.20 594a1.1 1.9 0 1 0 2.2 0a1.1 1.9 0 1 0 -2.2 0M1031.80 594a1.1 1.9 0 1 0 2.2 0a1.1 1.9 0 1 0 -2.2 0" fill="none" stroke="#ffffff" stroke-width="1" shape-rendering="auto" transform="rotate(-90 1029 594)"/>
<path d="M849.60 633.6a1.1 1.9 0 1 0 2.2 0a1.1 1.9 0 1 0 -2.2 0M852.20 633.6a1.1 1.9 0 1 0 2.2 0a1.1 1.9 0 1 0 -2.2 0" fill="none" stroke="#ffffff" stroke-width="1" shape-rendering="auto"/>
<path d="M1016.60 633.6a1.1 1.9 0 1 0 2.2 0a1.1 1.9 0 1 0 -2.2 0M1019.20 633.6a1.1 1.9 0 1 0 2.2 0a1.1 1.9 0 1 0 -2.2 0" fill="none" stroke="#ffffff" stroke-width="1" shape-rendering="auto"/>
<path d="M897.10 609a1.1 1.9 0 1 0 2.2 0a1.1 1.9 0 1 0 -2.2 0M899.70 609a1.1 1.9 0 1 0 2.2 0a1.1 1.9 0 1 0 -2.2 0" fill="none" stroke="#ffffff" stroke-width="1" shape-rendering="auto"/>
<path d="M969.00 609a1.1 1.9 0 1 0 2.2 0a1.1 1.9 0 1 0 -2.2 0M971.60 609a1.1 1.9 0 1 0 2.2 0a1.1 1.9 0 1 0 -2.2 0" fill="none" stroke="#ffffff" stroke-width="1" shape-rendering="auto"/>
<text x="717.0" y="750.5" font-size="6.5" fill="#ffffff" text-anchor="middle" font-family="Liberation Mono" font-weight="bold" letter-spacing="-0.2">XX</text>
<text x="717.0" y="758.0" font-size="6.5" fill="#ffffff" text-anchor="middle" font-family="Liberation Mono" font-weight="bold" letter-spacing="-0.2">X</text>
<text x="717.0" y="766.0" font-size="6.5" fill="#ffffff" text-anchor="middle" font-family="Liberation Mono" font-weight="bold" letter-spacing="-0.2">X</text>
<text x="717.0" y="774.0" font-size="6.5" fill="#ffffff" text-anchor="middle" font-family="Liberation Mono" font-weight="bold" letter-spacing="-0.2">X</text>
<text x="717.0" y="781.5" font-size="6.5" fill="#ffffff" text-anchor="middle" font-family="Liberation Mono" font-weight="bold" letter-spacing="-0.2">XX</text>
<text x="746.5" y="750.5" font-size="6.5" fill="#ffffff" text-anchor="middle" font-family="Liberation Mono" font-weight="bold" letter-spacing="-0.2">XXXXXX</text>
<text x="749.5" y="758.0" font-size="6.5" fill="#ffffff" text-anchor="middle" font-family="Liberation Mono" font-weight="bold" letter-spacing="-0.2">XXXXX</text>
<text x="749.5" y="766.0" font-size="6.5" fill="#ffffff" text-anchor="middle" font-family="Liberation Mono" font-weight="bold" letter-spacing="-0.2">XXXXX</text>
<text x="749.5" y="774.0" font-size="6.5" fill="#ffffff" text-anchor="middle" font-family="Liberation Mono" font-weight="bold" letter-spacing="-0.2">XXXXX</text>
<text x="749.5" y="781.5" font-size="6.5" fill="#ffffff" text-anchor="middle" font-family="Liberation Mono" font-weight="bold" letter-spacing="-0.2">XXXXX</text>
<text x="774.0" y="750.5" font-size="6.5" fill="#ffffff" text-anchor="middle" font-family="Liberation Mono" font-weight="bold" letter-spacing="-0.2">XXXXXX</text>
<text x="777.0" y="758.0" font-size="6.5" fill="#ffffff" text-anchor="middle" font-family="Liberation Mono" font-weight="bold" letter-spacing="-0.2">XXXXX</text>
<text x="777.0" y="766.0" font-size="6.5" fill="#ffffff" text-anchor="middle" font-family="Liberation Mono" font-weight="bold" letter-spacing="-0.2">XXXXX</text>
<text x="777.0" y="774.0" font-size="6.5" fill="#ffffff" text-anchor="middle" font-family="Liberation Mono" font-weight="bold" letter-spacing="-0.2">XXXXX</text>
<text x="777.0" y="781.5" font-size="6.5" fill="#ffffff" text-anchor="middle" font-family="Liberation Mono" font-weight="bold" letter-spacing="-0.2">XXXXX</text>
<text x="801.5" y="750.5" font-size="6.5" fill="#ffffff" text-anchor="middle" font-family="Liberation Mono" font-weight="bold" letter-spacing="-0.2">XXXXXX</text>
<text x="804.5" y="758.0" font-size="6.5" fill="#ffffff" text-anchor="middle" font-family="Liberation Mono" font-weight="bold" letter-spacing="-0.2">XXXXX</text>
<text x="804.5" y="766.0" font-size="6.5" fill="#ffffff" text-anchor="middle" font-family="Liberation Mono" font-weight="bold" letter-spacing="-0.2">XXXXX</text>
<text x="804.5" y="774.0" font-size="6.5" fill="#ffffff" text-anchor="middle" font-family="Liberation Mono" font-weight="bold" letter-spacing="-0.2">XXXXX</text>
<text x="804.5" y="781.5" font-size="6.5" fill="#ffffff" text-anchor="middle" font-family="Liberation Mono" font-weight="bold" letter-spacing="-0.2">XXXXX</text>
<text x="829.0" y="750.5" font-size="6.5" fill="#ffffff" text-anchor="middle" font-family="Liberation Mono" font-weight="bold" letter-spacing="-0.2">XXXXXX</text>
<text x="832.0" y="758.0" font-size="6.5" fill="#ffffff" text-anchor="middle" font-family="Liberation Mono" font-weight="bold" letter-spacing="-0.2">XXXXX</text>
<text x="832.0" y="766.0" font-size="6.5" fill="#ffffff" text-anchor="middle" font-family="Liberation Mono" font-weight="bold" letter-spacing="-0.2">XXXXX</text>
<text x="832.0" y="774.0" font-size="6.5" fill="#ffffff" text-anchor="middle" font-family="Liberation Mono" font-weight="bold" letter-spacing="-0.2">XXXXX</text>
<text x="832.0" y="781.5" font-size="6.5" fill="#ffffff" text-anchor="middle" font-family="Liberation Mono" font-weight="bold" letter-spacing="-0.2">XXXXX</text>
<text x="856.5" y="750.5" font-size="6.5" fill="#ffffff" text-anchor="middle" font-family="Liberation Mono" font-weight="bold" letter-spacing="-0.2">XXXXXX</text>
<text x="859.5" y="758.0" font-size="6.5" fill="#ffffff" text-anchor="middle" font-family="Liberation Mono" font-weight="bold" letter-spacing="-0.2">XXXXX</text>
<text x="859.5" y="766.0" font-size="6.5" fill="#ffffff" text-anchor="middle" font-family="Liberation Mono" font-weight="bold" letter-spacing="-0.2">XXXXX</text>
<text x="859.5" y="774.0" font-size="6.5" fill="#ffffff" text-anchor="middle" font-family="Liberation Mono" font-weight="bold" letter-spacing="-0.2">XXXXX</text>
<text x="859.5" y="781.5" font-size="6.5" fill="#ffffff" text-anchor="middle" font-family="Liberation Mono" font-weight="bold" letter-spacing="-0.2">XXXXX</text>
<text x="883.5" y="750.5" font-size="6.5" fill="#ffffff" text-anchor="middle" font-family="Liberation Mono" font-weight="bold" letter-spacing="-0.2">XXXXXX</text>
<text x="886.5" y="758.0" font-size="6.5" fill="#ffffff" text-anchor="middle" font-family="Liberation Mono" font-weight="bold" letter-spacing="-0.2">XXXXX</text>
<text x="886.5" y="766.0" font-size="6.5" fill="#ffffff" text-anchor="middle" font-family="Liberation Mono" font-weight="bold" letter-spacing="-0.2">XXXXX</text>
<text x="886.5" y="774.0" font-size="6.5" fill="#ffffff" text-anchor="middle" font-family="Liberation Mono" font-weight="bold" letter-spacing="-0.2">XXXXX</text>
<text x="886.5" y="781.5" font-size="6.5" fill="#ffffff" text-anchor="middle" font-family="Liberation Mono" font-weight="bold" letter-spacing="-0.2">XXXXX</text>
<text x="1062" y="797.8" font-size="7" fill="#ffffff" text-anchor="middle" font-family="Liberation Mono" font-weight="bold" letter-spacing="-0.2">XXX</text>
<text x="1062" y="808.8" font-size="7" fill="#ffffff" text-anchor="middle" font-family="Liberation Mono" font-weight="bold" letter-spacing="-0.2">XXX</text>
<text x="1062" y="819.8" font-size="7" fill="#ffffff" text-anchor="middle" font-family="Liberation Mono" font-weight="bold" letter-spacing="-0.2">XXXX</text>
<text x="1062" y="830.8" font-size="7" fill="#ffffff" text-anchor="middle" font-family="Liberation Mono" font-weight="bold" letter-spacing="-0.2">XX</text>
<text x="1062" y="841.8" font-size="7" fill="#ffffff" text-anchor="middle" font-family="Liberation Mono" font-weight="bold" letter-spacing="-0.2">XXX</text>
<text x="1062" y="852.8" font-size="7" fill="#ffffff" text-anchor="middle" font-family="Liberation Mono" font-weight="bold" letter-spacing="-0.2">XXXX</text>
<text x="1117" y="830.8" font-size="7" fill="#ffffff" text-anchor="middle" font-family="Liberation Mono" font-weight="bold" letter-spacing="-0.2">XXXX</text>
<text x="1144" y="830.8" font-size="7" fill="#ffffff" text-anchor="middle" font-family="Liberation Mono" font-weight="bold" letter-spacing="-0.2">X</text></svg><!--/CAD-->

<!-- scrollbars -->
<div class="a dither" style="left:1224px;top:68px;width:18px;height:812px"></div>
<div class="a raised2" style="left:1224px;top:68px;width:16px;height:14px;background:#D4D0C8"><svg class="a" style="left:3px;top:3px" width="9" height="6"><path d="M4.5 1L8.5 5H0.5Z" fill="#000"/></svg></div>
<div class="a raised2" style="left:1224px;top:82px;width:16px;height:16px;background:#D4D0C8"></div>
<div class="a raised2" style="left:1224px;top:866px;width:16px;height:14px;background:#D4D0C8"><svg class="a" style="left:3px;top:4px" width="9" height="6"><path d="M0.5 0.5H8.5L4.5 4.5Z" fill="#000"/></svg></div>
<div class="a dither" style="left:4px;top:880px;width:1220px;height:20px"></div>
<div class="a raised2" style="left:5px;top:881px;width:14px;height:19px;background:#D4D0C8"><svg class="a" style="left:3px;top:5px" width="6" height="9"><path d="M1 4.5L5 0.5V8.5Z" fill="#000"/></svg></div>
<div class="a raised2" style="left:19px;top:881px;width:16px;height:19px;background:#D4D0C8"></div>
<div class="a raised2" style="left:1210px;top:880px;width:14px;height:20px;background:#D4D0C8"><svg class="a" style="left:4px;top:5px" width="6" height="9"><path d="M1 0.5L5 4.5L1 8.5Z" fill="#000"/></svg></div>
<div class="a" style="left:1224px;top:880px;width:17px;height:21px;background:#D4D0C8;border-left:1px solid #fff;border-top:1px solid #fff;border-right:1px solid #808080"></div>

<!-- status -->
<div class="a" style="left:4px;top:903px;width:1237px;height:1px;background:#808080"></div>
<div class="a" style="left:4px;top:904px;width:1237px;height:1px;background:#fff"></div>
<div class="a raised" style="left:6px;top:906px;width:22px;height:22px;background:#D4D0C8"></div>
<div class="t" style="left:11px;top:910px">詳</div>
<div class="a raised" style="left:30px;top:906px;width:41px;height:22px;background:#D4D0C8"></div>
<div class="t" style="left:38px;top:910px">実寸</div>
<div class="a raised" style="left:72px;top:906px;width:80px;height:22px;background:#D4D0C8"></div>
<div class="t" style="left:78px;top:910px">絶対</div>
<div class="t m" style="left:103px;top:910px;font-size:11px;letter-spacing:2px">(X,Y)</div>
<div class="a raised" style="left:153px;top:906px;width:23px;height:22px;background:#D4D0C8"></div>
<div class="a" style="left:156px;top:909px;width:18px;height:16px;background:#808080"></div>
<svg class="a" style="left:161px;top:913px" width="8" height="8"><path d="M1 1L7 7M7 1L1 7" stroke="#fff" stroke-width="1"/></svg>
<div class="a sunk" style="left:177px;top:907px;width:1056px;height:20px;box-shadow:inset 1px 1px 0 #D4D0C8"></div>
<div class="t m" style="left:186px;top:911px;font-size:11px;letter-spacing:-0.6px">( X : 59349.1803, Y : 1193.4426 )</div>
<div class="a sunk" style="left:4px;top:931px;width:264px;height:17px"></div>
<div class="a sunk" style="left:270px;top:931px;width:971px;height:17px;border-right:none"></div>
<div class="t" style="left:6px;top:934px">表示-矩形指定拡大</div>
<div class="t" style="left:273px;top:934px">拡大領域の始点を指定してください</div>
<svg class="a" style="left:1228px;top:937px" width="12" height="12"><path d="M11 1L1 11M11 4L4 11M11 7L7 11" stroke="#fff" stroke-width="1"/><path d="M11.5 2L2 11.5M11.5 5L5 11.5M11.5 8L8 11.5" stroke="#808080" stroke-width="1"/></svg>
</body></html>
